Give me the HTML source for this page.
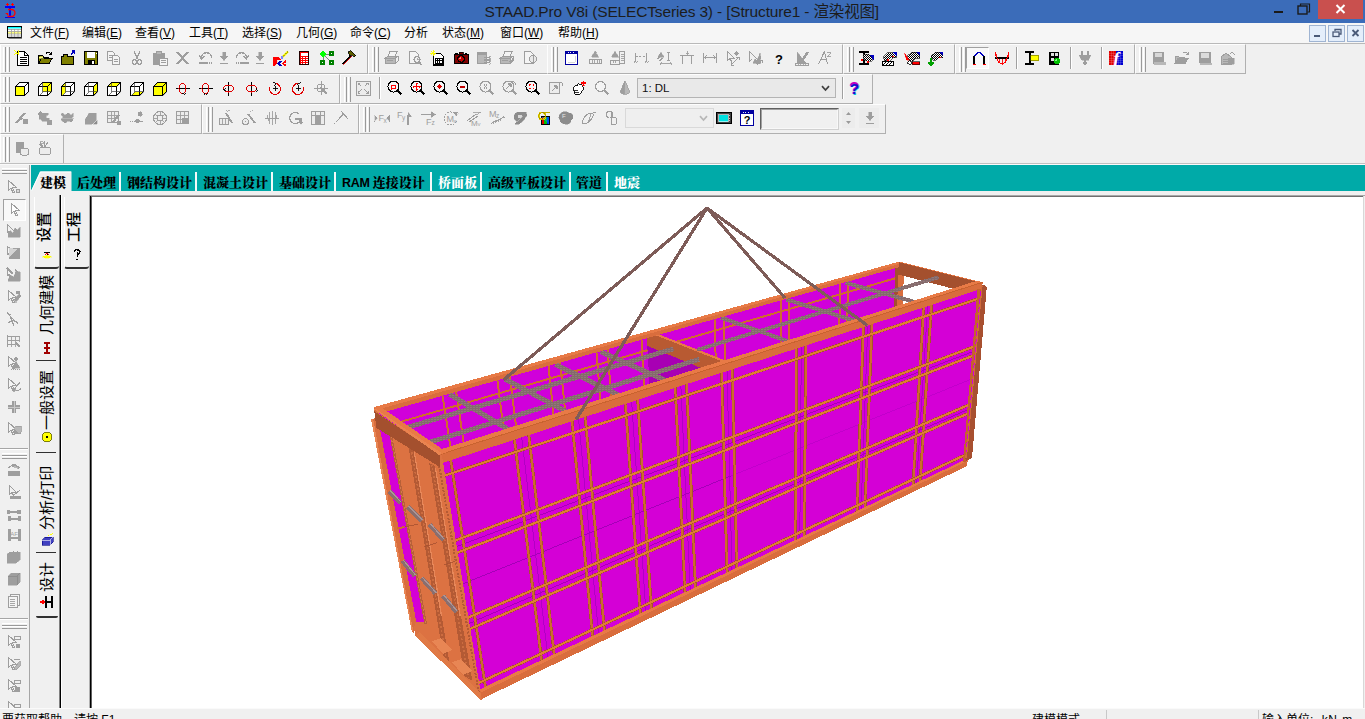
<!DOCTYPE html><html><head><meta charset="utf-8"><title>STAAD.Pro</title><style>
html,body{margin:0;padding:0}
body{width:1365px;height:719px;overflow:hidden;position:relative;background:#f0f0f0;font-family:"Liberation Sans","Noto Sans CJK SC",sans-serif;font-size:12px;color:#000}
.abs{position:absolute}
#title{left:0;top:0;width:1365px;height:23px;background:#3b6cb9}
#title .txt{position:absolute;left:484.5px;top:1px;letter-spacing:-0.16px;font-size:15.5px;line-height:21px;color:#1c1c1c;white-space:nowrap}
#menu{left:0;top:23px;width:1365px;height:20px;background:#f6f6f6;border-bottom:1px solid #b9b9b9}
#menu span{position:absolute;top:1px;line-height:18px;font-size:12px;white-space:nowrap;color:#000}
.tb{position:absolute;height:30px;border:1px solid;border-color:#fdfdfd #b0b0b0 #b0b0b0 #fdfdfd;box-sizing:border-box;background:#f0f0f0}
.grip{position:absolute;top:2px;width:2px;height:25px;border-left:1px solid #fff;border-right:1px solid #9a9a9a;box-sizing:border-box;width:3px}
.ic{position:absolute;width:16px;height:16px}
.sep{position:absolute;width:2px;box-sizing:border-box;border-left:1px solid #a0a0a0;border-right:1px solid #fff;height:22px}
.tab{position:absolute;top:173px;height:18px;line-height:19px;font-family:"Liberation Serif","Noto Serif CJK SC",serif;font-weight:900;font-size:13px;white-space:nowrap;color:#000}
.tsep{position:absolute;top:172px;width:2px;height:19px;background:#f4fafa}
.vt{position:absolute;white-space:nowrap;font-size:15px;line-height:16px;transform-origin:0 0;transform:rotate(-90deg);color:#000}
</style></head><body>
<div id="title" class="abs"><svg class="ic" style="left:2px;top:2px" viewBox="0 0 16 16" width="16" height="16" shape-rendering="crispEdges"><path d="M5.5 1v3M4 2.5h3M10.5 1v3M9 2.5h3" stroke="#ff0000" stroke-width="1" fill="none" /><rect x="3" y="4" width="10" height="1.6" fill="#0000ff"/><rect x="7" y="5.5" width="2" height="10" fill="#0000ff"/><rect x="3" y="15" width="10" height="2" fill="#0000ff"/><path d="M6 7.5h3.5a3.5 3.5 0 0 1 0 7h-4" fill="none" stroke="#ff0000" stroke-width="1.3" shape-rendering="auto"/><path d="M3 11h3v3z" stroke="#ff0000" stroke-width="0.2" fill="#ff0000" /></svg><div class="txt">STAAD.Pro V8i (SELECTseries 3) - [Structure1 - 渲染视图]</div>
<div class="abs" style="left:1274px;top:11px;width:9px;height:2px;background:#1a1a1a"></div>
<svg class="abs" style="left:1297px;top:3px" width="14" height="12" viewBox="0 0 14 12"><path d="M3.5 3V1h9v8h-2" fill="none" stroke="#1a1a1a" stroke-width="1.2"/><rect x="1" y="3" width="9" height="8" fill="none" stroke="#1a1a1a" stroke-width="1.4"/></svg>
<div class="abs" style="left:1318px;top:0;width:45px;height:19px;background:#c9504e"></div>
<svg class="abs" style="left:1335px;top:4px" width="11" height="10" viewBox="0 0 11 10"><path d="M1.5 1L9.5 9M9.5 1L1.5 9" stroke="#fff" stroke-width="2"/></svg>
</div>
<div id="menu" class="abs"><svg class="ic" style="left:6px;top:2px" viewBox="0 0 16 16" width="16" height="16" shape-rendering="auto"><rect x="1.5" y="1.5" width="14" height="11" fill="#fff" stroke="#000" stroke-width="1"/><rect x="2" y="2" width="13" height="1.5" fill="#00ffff"/><rect x="2" y="6.5" width="13" height="2.5" fill="#ffff80"/><path d="M2 4.5h13M2 6.5h13M2 9h13M2 11h13M5.5 4v8M8.5 4v8M12 4v8" stroke="#a0a0a0" stroke-width="0.8" fill="none" /><path d="M2.5 13.2h13.4V3" stroke="#505050" stroke-width="1" fill="none" /></svg>
<span style="left:30px">文件(<u>F</u>)</span>
<span style="left:82px">编辑(<u>E</u>)</span>
<span style="left:135px">查看(<u>V</u>)</span>
<span style="left:189px">工具(<u>T</u>)</span>
<span style="left:242px">选择(<u>S</u>)</span>
<span style="left:296px">几何(<u>G</u>)</span>
<span style="left:350px">命令(<u>C</u>)</span>
<span style="left:404px">分析</span>
<span style="left:442px">状态(<u>M</u>)</span>
<span style="left:500px">窗口(<u>W</u>)</span>
<span style="left:558px">帮助(<u>H</u>)</span>
<div class="abs" style="left:1309px;top:2px;width:17px;height:17px;box-sizing:border-box;border:1px solid #9fb4d2;background:#e4eefb"></div>
<div class="abs" style="left:1328px;top:2px;width:17px;height:17px;box-sizing:border-box;border:1px solid #9fb4d2;background:#e4eefb"></div>
<div class="abs" style="left:1347px;top:2px;width:17px;height:17px;box-sizing:border-box;border:1px solid #9fb4d2;background:#e4eefb"></div>
<div class="abs" style="left:1314px;top:12px;width:6px;height:2px;background:#4a5a78"></div>
<svg class="abs" style="left:1332px;top:5px" width="10" height="10" viewBox="0 0 10 10"><path d="M3 3V1.5h6v4.5h-2" fill="none" stroke="#4a5a78" stroke-width="1.3"/><rect x="1" y="4" width="6" height="4.5" fill="none" stroke="#4a5a78" stroke-width="1.3"/></svg>
<svg class="abs" style="left:1351px;top:6px" width="9" height="8" viewBox="0 0 9 8"><path d="M1.5 1L7.5 7M7.5 1L1.5 7" stroke="#4a5a78" stroke-width="1.8"/></svg>
</div>
<div class="tb" style="left:0px;top:44px;width:368px"><div class="grip" style="left:2px"></div><div class="grip" style="left:6px"></div><svg class="ic" style="left:13px;top:5px" viewBox="0 0 16 16" width="16" height="16" shape-rendering="crispEdges"><path d="M3.5 1.5h7l4 4v10h-11z" stroke="#000" stroke-width="1" fill="#fff" /><path d="M10.5 1.5v4h4" stroke="#000" stroke-width="1" fill="none" /><path d="M5.5 7.5h7M5.5 9.5h7M5.5 11.5h7M5.5 13.5h7" stroke="#000" stroke-width="1" fill="none" /><path d="M0.5 0.5l4 4M4.5 0v5M0 4.5l5-2" stroke="#ffff00" stroke-width="1" fill="none" /></svg><svg class="ic" style="left:36px;top:5px" viewBox="0 0 16 16" width="16" height="16" shape-rendering="crispEdges"><path d="M1.5 13.5v-8h4l1 1.5h5v2" stroke="#000" stroke-width="1" fill="#808000" /><path d="M1.5 13.5l3-5h10.5l-3 5z" stroke="#000" stroke-width="1" fill="#808000" /><path d="M2.5 6.5h3l1 1.5h-4.5z" stroke="#ffff80" stroke-width="0.5" fill="#ffff80" /><path d="M9 3.5c2-2 4-1.5 5 0.5" stroke="#000" stroke-width="1" fill="none" /><path d="M14.5 1.5v3h-3" stroke="#000" stroke-width="1" fill="none" /></svg><svg class="ic" style="left:59px;top:5px" viewBox="0 0 16 16" width="16" height="16" shape-rendering="crispEdges"><path d="M1.5 6.5h12v8h-12z" stroke="#000" stroke-width="1" fill="#808000" /><path d="M3 6.5v-2h4v2" stroke="#000" stroke-width="1" fill="#808000" /><path d="M11 4.5l3.5-3.5M11.5 1h3v3" stroke="#0000c0" stroke-width="1.2" fill="none" /></svg><svg class="ic" style="left:82px;top:5px" viewBox="0 0 16 16" width="16" height="16" shape-rendering="crispEdges"><rect x="1.5" y="1.5" width="13" height="13" fill="#808000" stroke="#000" stroke-width="1"/><rect x="4" y="2" width="8" height="5.5" fill="#fff"/><rect x="4.5" y="9.5" width="7" height="5" fill="#000"/><rect x="9" y="10.5" width="2" height="3" fill="#fff"/><rect x="12.5" y="2.5" width="1.2" height="1.2" fill="#fff"/></svg><svg class="ic" style="left:105px;top:5px" viewBox="0 0 16 16" width="16" height="16" shape-rendering="crispEdges"><path d="M1.5 1.5h5l2 2v7h-7z" stroke="#9e9e9e" stroke-width="1" fill="#f4f4f4" /><path d="M6.5 5.5h5l2 2v7h-7z" stroke="#9e9e9e" stroke-width="1" fill="#f4f4f4" /><path d="M3 5h3M3 7h3M8 9.5h4M8 11.5h4" stroke="#9e9e9e" stroke-width="1" fill="none" /></svg><svg class="ic" style="left:128px;top:5px" viewBox="0 0 16 16" width="16" height="16" shape-rendering="crispEdges"><path d="M5 1l3.5 8M11 1l-3.5 8" stroke="#9e9e9e" stroke-width="1.3" fill="none" /><circle cx="5.5" cy="12" r="2.2" fill="none" stroke="#9e9e9e" stroke-width="1.2"/><circle cx="10.5" cy="12" r="2.2" fill="none" stroke="#9e9e9e" stroke-width="1.2"/></svg><svg class="ic" style="left:151px;top:5px" viewBox="0 0 16 16" width="16" height="16" shape-rendering="crispEdges"><rect x="1.5" y="3.5" width="11" height="11" fill="#9e9e9e" stroke="#9e9e9e" stroke-width="1"/><rect x="4.5" y="1.5" width="5" height="3" fill="#b8b8b8" stroke="#9e9e9e" stroke-width="1"/><rect x="7" y="8" width="8" height="7" fill="#f4f4f4" stroke="#9e9e9e" stroke-width="1"/><path d="M8.5 10.5h5M8.5 12.5h5" stroke="#9e9e9e" stroke-width="1" fill="none" /></svg><svg class="ic" style="left:174px;top:5px" viewBox="0 0 16 16" width="16" height="16" shape-rendering="crispEdges"><path d="M2 2l11 12M13 2l-11 12" stroke="#9e9e9e" stroke-width="2" fill="none" /></svg><svg class="ic" style="left:197px;top:5px" viewBox="0 0 16 16" width="16" height="16" shape-rendering="crispEdges"><path d="M3.5 8c0-7 10-7 10 0" stroke="#9e9e9e" stroke-width="1.3" fill="none" /><path d="M1 5l2.5 4l3-3" stroke="#9e9e9e" stroke-width="1.2" fill="none" /><path d="M1 13h9" stroke="#9e9e9e" stroke-width="2" fill="none" /><path d="M10.5 13h4" stroke="#9e9e9e" stroke-width="2" fill="none" stroke-dasharray="1 1"/></svg><svg class="ic" style="left:215px;top:5px" viewBox="0 0 16 16" width="16" height="16" shape-rendering="crispEdges"><path d="M6.5 2h3v4h2.5l-4 4.5l-4-4.5h2.500z" stroke="#9e9e9e" stroke-width="0.5" fill="#9e9e9e" /><rect x="4" y="12.5" width="8" height="1.3" fill="#9e9e9e"/></svg><svg class="ic" style="left:233px;top:5px" viewBox="0 0 16 16" width="16" height="16" shape-rendering="crispEdges"><path d="M2.5 8c0-7 10-7 10 0" stroke="#9e9e9e" stroke-width="1.3" fill="none" /><path d="M15 5l-2.5 4l-3-3" stroke="#9e9e9e" stroke-width="1.2" fill="none" /><path d="M6 13h9" stroke="#9e9e9e" stroke-width="2" fill="none" /><path d="M1.5 13h4" stroke="#9e9e9e" stroke-width="2" fill="none" stroke-dasharray="1 1"/></svg><svg class="ic" style="left:251px;top:5px" viewBox="0 0 16 16" width="16" height="16" shape-rendering="crispEdges"><path d="M6.5 2h3v4h2.5l-4 4.5l-4-4.5h2.500z" stroke="#9e9e9e" stroke-width="0.5" fill="#9e9e9e" /><rect x="4" y="12.5" width="8" height="1.3" fill="#9e9e9e"/></svg><svg class="ic" style="left:272px;top:5px" viewBox="0 0 16 16" width="16" height="16" shape-rendering="crispEdges"><path d="M0 7h6l2 2.5h-4v3.5l-2 2.5h-2z" stroke="#ff0000" stroke-width="0.1" fill="#ff0000" /><path d="M8.5 11l-3 2.5l3 2.5" stroke="#0000c0" stroke-width="1.8" fill="none" /><path d="M13 11l-3 2.5l3 2.5" stroke="#ff0000" stroke-width="1.8" fill="none" /><path d="M15 1.5l-5.5 5.5" stroke="#ffff00" stroke-width="2.2" shape-rendering="auto"/><path d="M15 1.5l-5.5 5.5" stroke="#000" stroke-width="0.8" stroke-dasharray="1.2 1.2" shape-rendering="auto"/><circle cx="9" cy="7.5" r="1.4" fill="#8080ff"/></svg><svg class="ic" style="left:295px;top:5px" viewBox="0 0 16 16" width="16" height="16" shape-rendering="crispEdges"><rect x="3.5" y="1.5" width="9" height="13" fill="#ff0000" stroke="#200000" stroke-width="1"/><rect x="4.5" y="2.5" width="7" height="3" fill="#fff"/><path d="M4.5 7.5h7M4.5 9.5h7M4.5 11.5h7M4.5 13.4h7" stroke="#fff" stroke-width="1" fill="none" stroke-dasharray="1.7 1"/></svg><svg class="ic" style="left:318px;top:5px" viewBox="0 0 16 16" width="16" height="16" shape-rendering="crispEdges"><path d="M4 4l8 8M4 4h9M4 4v9" stroke="#808080" stroke-width="1" fill="none" /><rect x="10" y="1" width="5" height="5" fill="#008000"/><rect x="1" y="10" width="5" height="5" fill="#008000"/><rect x="10" y="10" width="5" height="5" fill="#008000"/><path d="M4 0.5l3.500 3.500l-3.500 3.500l-3.500-3.500z" stroke="#00ff00" stroke-width="0.3" fill="#00ff00" /><rect x="12" y="2.5" width="1.3" height="1.3" fill="#fff"/><rect x="3" y="12" width="1.3" height="1.3" fill="#fff"/><rect x="12" y="12" width="1.3" height="1.3" fill="#fff"/></svg><svg class="ic" style="left:340px;top:5px" viewBox="0 0 16 16" width="16" height="16" shape-rendering="crispEdges"><path d="M2 14l8-8.500" stroke="#000" stroke-width="2.2" fill="none" /><path d="M2.5 14.5l8-8.500" stroke="#ff0000" stroke-width="0.8" fill="none" /><path d="M7 2l3-1.500l5 5l-2 1.500l-2-2l-2 1z" stroke="#000" stroke-width="0.8" fill="#606000" /></svg></div>
<div class="tb" style="left:368px;top:44px;width:180px"><div class="grip" style="left:3px"></div><div class="grip" style="left:7px"></div><svg class="ic" style="left:15px;top:5px" viewBox="0 0 16 16" width="16" height="16" shape-rendering="crispEdges"><path d="M4 6l2-4.500h7l-2 4.500" stroke="#9e9e9e" stroke-width="1" fill="#f4f4f4" /><path d="M1.5 8l2.500-2h10l-2.500 2z" stroke="#9e9e9e" stroke-width="1" fill="#b8b8b8" /><rect x="1.5" y="8" width="10" height="5" fill="#b8b8b8" stroke="#9e9e9e" stroke-width="1"/><path d="M11.5 13l2.500-2v-5" stroke="#9e9e9e" stroke-width="1" fill="none" /><path d="M3 10.5h6" stroke="#9e9e9e" stroke-width="1.6" fill="none" /></svg><svg class="ic" style="left:38px;top:5px" viewBox="0 0 16 16" width="16" height="16" shape-rendering="crispEdges"><path d="M2.5 1.500h6l3 3v9h-9z" stroke="#9e9e9e" stroke-width="1" fill="#f4f4f4" /><circle cx="10" cy="9.5" r="3" fill="#f0f0f0" stroke="#9e9e9e" stroke-width="1.2"/><path d="M12 12l2.500 3" stroke="#9e9e9e" stroke-width="1.8" fill="none" /><path d="M10 8v1.500h1.500" stroke="#9e9e9e" stroke-width="0.8" fill="none" /></svg><svg class="ic" style="left:61px;top:5px" viewBox="0 0 16 16" width="16" height="16" shape-rendering="crispEdges"><path d="M3.5 3.500h7l3 3v8.500h-10z" stroke="#000" stroke-width="1.2" fill="#fff" /><rect x="5" y="8" width="7" height="5.5" fill="#fff" stroke="#000" stroke-width="1"/><path d="M5 10.500h7M7.300 8v5.500M9.600 8v5.500" stroke="#000" stroke-width="1" fill="none" /><path d="M3 0v6M0 3h6M1 1l4 4M5 1l-4 4" stroke="#ffff00" stroke-width="0.9" fill="none" /></svg><svg class="ic" style="left:84px;top:5px" viewBox="0 0 16 16" width="16" height="16" shape-rendering="crispEdges"><rect x="1" y="4.5" width="14" height="9" fill="#800000" stroke="#000" stroke-width="1"/><rect x="2" y="2.5" width="3" height="2" fill="#000"/><rect x="6" y="2" width="4" height="2.5" fill="#800000" stroke="#000" stroke-width="0.8"/><rect x="11.5" y="2.5" width="2.5" height="2" fill="#000"/><circle cx="8" cy="9" r="3.2" fill="#c00000" stroke="#000" stroke-width="1.2"/><circle cx="7.3" cy="8.3" r="1" fill="#ff8080"/></svg><svg class="ic" style="left:107px;top:5px" viewBox="0 0 16 16" width="16" height="16" shape-rendering="crispEdges"><rect x="1.5" y="2.5" width="9" height="11" fill="#b8b8b8" stroke="#9e9e9e" stroke-width="1"/><rect x="1.5" y="2.5" width="9" height="2.5" fill="#9e9e9e"/><path d="M8 7.500h6M8 10h6M8 12.500h6" stroke="#9e9e9e" stroke-width="1.2" fill="none" /><path d="M12.5 6l2 1.500l-2 1.500M12.5 8.500l2 1.500l-2 1.500M12.5 11l2 1.500l-2 1.500" stroke="#9e9e9e" stroke-width="0.8" fill="none" /></svg><svg class="ic" style="left:130px;top:5px" viewBox="0 0 16 16" width="16" height="16" shape-rendering="crispEdges"><path d="M4 6l2-4.500h7l-2 4.500" stroke="#9e9e9e" stroke-width="1" fill="#f4f4f4" /><path d="M1.5 8l2.500-2h10l-2.500 2z" stroke="#9e9e9e" stroke-width="1" fill="#b8b8b8" /><rect x="1.5" y="8" width="10" height="5" fill="#b8b8b8" stroke="#9e9e9e" stroke-width="1"/><path d="M11.5 13l2.500-2v-5" stroke="#9e9e9e" stroke-width="1" fill="none" /><path d="M3 10.5h6" stroke="#9e9e9e" stroke-width="1.6" fill="none" /><path d="M10 8l4 4M13 8v3h-3" stroke="#9e9e9e" stroke-width="1" fill="none" /></svg><svg class="ic" style="left:153px;top:5px" viewBox="0 0 16 16" width="16" height="16" shape-rendering="crispEdges"><path d="M2.5 1.500h6l3 3v9h-9z" stroke="#9e9e9e" stroke-width="1" fill="#f4f4f4" /><circle cx="11" cy="9" r="3.5" fill="#e8e8e8" stroke="#9e9e9e" stroke-width="1.2"/><path d="M11 5.500v7" stroke="#9e9e9e" stroke-width="1" fill="none" /></svg></div>
<div class="tb" style="left:547px;top:44px;width:296px"><div class="grip" style="left:3px"></div><div class="grip" style="left:7px"></div><svg class="ic" style="left:16px;top:5px" viewBox="0 0 16 16" width="16" height="16" shape-rendering="crispEdges"><rect x="1.5" y="1.5" width="12" height="13" fill="#fff" stroke="#0000a0" stroke-width="1.6"/><rect x="1.5" y="1.5" width="12" height="2.5" fill="#0000a0"/><path d="M3.5 2.700h1M6 2.700h1M8.500 2.700h1" stroke="#fff" stroke-width="0.9" fill="none" /><path d="M11 6v6M4 12.500h7" stroke="#d8d8d8" stroke-width="1" fill="none" /></svg><svg class="ic" style="left:39px;top:5px" viewBox="0 0 16 16" width="16" height="16" shape-rendering="crispEdges"><path d="M8 1l3.500 6h-7z" stroke="#9e9e9e" stroke-width="0.5" fill="#9e9e9e" /><path d="M8 0.500v3M6.500 2h3" stroke="#9e9e9e" stroke-width="0.8" fill="none" /><rect x="2.5" y="9.5" width="12" height="4" fill="#f0f0f0" stroke="#9e9e9e" stroke-width="1"/><path d="M5 10v2.500M7.500 10v2.500M10 10v2.500M12.500 10v2.500" stroke="#9e9e9e" stroke-width="0.9" fill="none" /></svg><svg class="ic" style="left:62px;top:5px" viewBox="0 0 16 16" width="16" height="16" shape-rendering="crispEdges"><path d="M5 1l3.500 6h-7z" stroke="#9e9e9e" stroke-width="0.5" fill="#9e9e9e" /><rect x="0.5" y="10" width="9" height="4" fill="#f0f0f0" stroke="#9e9e9e" stroke-width="1"/><path d="M3 10.500v2.500M5.500 10.500v2.500" stroke="#9e9e9e" stroke-width="0.9" fill="none" /><rect x="9.5" y="1.5" width="5" height="12" fill="#f0f0f0" stroke="#9e9e9e" stroke-width="1"/><path d="M11 4h2.500M11 6h2.500M11 8h2.500M11 10h2.500" stroke="#9e9e9e" stroke-width="0.9" fill="none" /></svg><svg class="ic" style="left:85px;top:5px" viewBox="0 0 16 16" width="16" height="16" shape-rendering="crispEdges"><path d="M2.5 3v9M13.500 3v9" stroke="#9e9e9e" stroke-width="1.1" fill="none" /><path d="M2.500 6.500h11" stroke="#9e9e9e" stroke-width="1" fill="none" stroke-dasharray="2 1.5"/><path d="M1 10.500l1.500 2l1.500-2M12 10.500l1.500 2l1.500-2" stroke="#9e9e9e" stroke-width="0.9" fill="none" /></svg><svg class="ic" style="left:108px;top:5px" viewBox="0 0 16 16" width="16" height="16" shape-rendering="crispEdges"><path d="M5 2l3 5h-6z" stroke="#9e9e9e" stroke-width="0.5" fill="#9e9e9e" /><path d="M1 9l4-3M3 11l4-3" stroke="#9e9e9e" stroke-width="1.3" fill="none" /><path d="M12.500 2v8M11 2h3M11 10h3" stroke="#9e9e9e" stroke-width="1" fill="none" /><path d="M4 13.500h11M5.500 12l-1.500 1.500l1.500 1.500M13.500 12l1.500 1.500l-1.500 1.500" stroke="#9e9e9e" stroke-width="0.9" fill="none" /></svg><svg class="ic" style="left:131px;top:5px" viewBox="0 0 16 16" width="16" height="16" shape-rendering="crispEdges"><path d="M1 5.500h14M3.500 5.500v8.500M12.500 5.500v8.500" stroke="#9e9e9e" stroke-width="1.1" fill="none" /><path d="M8 1v4M6.500 3h3" stroke="#9e9e9e" stroke-width="0.9" fill="none" /></svg><svg class="ic" style="left:154px;top:5px" viewBox="0 0 16 16" width="16" height="16" shape-rendering="crispEdges"><path d="M1.5 3v10M14.5 3v10M2 7.5h12" stroke="#9e9e9e" stroke-width="1" fill="none" /><path d="M4.5 5.5l-2 2l2 2M11.5 5.5l2 2l-2 2" stroke="#9e9e9e" stroke-width="1" fill="none" /></svg><svg class="ic" style="left:177px;top:5px" viewBox="0 0 16 16" width="16" height="16" shape-rendering="crispEdges"><path d="M2 1v10l3-2.500l2 4" stroke="#9e9e9e" stroke-width="1" fill="#f4f4f4" /><path d="M2 1l7 7h-4" stroke="#9e9e9e" stroke-width="1" fill="none" /><circle cx="11.5" cy="3.5" r="2.2" fill="#9e9e9e"/><path d="M6 15l8-8M6 15v-3M6 15h3M14 7v3M14 7h-3" stroke="#9e9e9e" stroke-width="1" fill="none" /></svg><svg class="ic" style="left:200px;top:5px" viewBox="0 0 16 16" width="16" height="16" shape-rendering="crispEdges"><path d="M1 1l9 9" stroke="#9e9e9e" stroke-width="1.1" fill="none" /><path d="M1 1v11l3-3" stroke="#9e9e9e" stroke-width="1" fill="none" /><path d="M5 13l2-4l2 2l3-8l1 6l-3 1l3 3l-3 1z" stroke="#9e9e9e" stroke-width="0.6" fill="#9e9e9e" /><path d="M9 15l5-5M14 10v3M14 10h-3" stroke="#9e9e9e" stroke-width="1" fill="none" /></svg><svg class="ic" style="left:223px;top:5px" viewBox="0 0 16 16" width="16" height="16" shape-rendering="crispEdges"><text x="8" y="13.5" font-family="Liberation Sans,sans-serif" font-weight="bold" font-size="13" text-anchor="middle" fill="#000">?</text></svg><svg class="ic" style="left:246px;top:5px" viewBox="0 0 16 16" width="16" height="16" shape-rendering="crispEdges"><path d="M3 13v-11l9 11z" stroke="#9e9e9e" stroke-width="0.6" fill="#9e9e9e" /><path d="M7 12l7-10" stroke="#9e9e9e" stroke-width="2.4" fill="none" /><rect x="1.5" y="13" width="13" height="2.5" fill="#f0f0f0" stroke="#9e9e9e" stroke-width="1"/><path d="M4 13v1.500M6.500 13v1.500M9 13v1.500M11.500 13v1.500" stroke="#9e9e9e" stroke-width="0.8" fill="none" /></svg><svg class="ic" style="left:269px;top:5px" viewBox="0 0 16 16" width="16" height="16" shape-rendering="crispEdges"><path d="M1.5 14l6-12.500M7.500 1.500l3 12.500M4 9h5" stroke="#9e9e9e" stroke-width="1" fill="none" /><path d="M9.500 2h4.500l-4.500 4h4.500" stroke="#9e9e9e" stroke-width="0.9" fill="none" /></svg></div>
<div class="tb" style="left:843px;top:44px;width:112px"><div class="grip" style="left:3px"></div><div class="grip" style="left:7px"></div><svg class="ic" style="left:14px;top:5px" viewBox="0 0 16 16" width="16" height="16" shape-rendering="crispEdges"><defs><pattern id="hk" width="2" height="2" patternUnits="userSpaceOnUse"><rect width="2" height="2" fill="#fff"/><rect width="1" height="1" fill="#000"/><rect x="1" y="1" width="1" height="1" fill="#000"/></pattern></defs><rect x="1" y="1" width="10" height="2" fill="#000"/><rect x="1" y="13" width="10" height="2" fill="#000"/><rect x="4.5" y="3" width="2.5" height="10" fill="#000"/><path d="M5 4l5 0l4 3v4h-5l-4-2z" stroke="#000" stroke-width="0.5" fill="url(#hk)" /><path d="M12 5h3.500v5z" stroke="#0000c0" stroke-width="0.3" fill="#0000c0" /><rect x="3" y="9" width="2" height="1.5" fill="#ff0000"/><rect x="9" y="11" width="2" height="1.5" fill="#ff0000"/></svg><svg class="ic" style="left:37px;top:5px" viewBox="0 0 16 16" width="16" height="16" shape-rendering="crispEdges"><path d="M2 7l5-4.500h5l3 2v3h-4l-3 3h-4z" stroke="#000" stroke-width="0.6" fill="url(#hk)" /><path d="M12 2h3.500v4z" stroke="#0000c0" stroke-width="0.3" fill="#0000c0" /><rect x="1.5" y="11" width="11" height="4" fill="#fff" stroke="#000" stroke-width="1"/><path d="M2 15l4-4M5 15l4-4M8 15l4-4" stroke="#000" stroke-width="1.2" fill="none" /><rect x="11" y="5.5" width="2" height="1.5" fill="#ff0000"/><rect x="6" y="9" width="2" height="1.5" fill="#ff0000"/></svg><svg class="ic" style="left:60px;top:5px" viewBox="0 0 16 16" width="16" height="16" shape-rendering="crispEdges"><path d="M3 6l5-4h5l2.500 2v4h-4l-3 3h-3z" stroke="#000" stroke-width="0.6" fill="url(#hk)" /><path d="M12.500 2h3.500v4z" stroke="#0000c0" stroke-width="0.3" fill="#0000c0" /><path d="M0.500 3l5 7h-3z" stroke="#ff0000" stroke-width="0.4" fill="#ff0000" /><rect x="8" y="11.5" width="7.5" height="3" fill="#ff0000" stroke="#000" stroke-width="0.6"/><circle cx="5.5" cy="12.5" r="1.8" fill="#fff" stroke="#000" stroke-width="0.8"/></svg><svg class="ic" style="left:83px;top:5px" viewBox="0 0 16 16" width="16" height="16" shape-rendering="crispEdges"><path d="M4 6l5-4h5l2 2v3.500h-4l-3 2.500h-3z" stroke="#000" stroke-width="0.6" fill="url(#hk)" /><path d="M12.500 2h3.500v4z" stroke="#0000c0" stroke-width="0.3" fill="#0000c0" /><rect x="12" y="6.5" width="2" height="1.5" fill="#ff0000"/><path d="M4 8v7M1.500 12.500l2.500 2.500l2.500-2.500" stroke="#00a000" stroke-width="1.5" fill="none" /></svg></div>
<div class="tb" style="left:955px;top:44px;width:180px"><div class="grip" style="left:3px"></div><div class="grip" style="left:7px"></div><svg class="ic" style="left:15px;top:5px" viewBox="0 0 16 16" width="16" height="16" shape-rendering="crispEdges"><path d="M3 14v-8M13 14v-8" stroke="#000" stroke-width="1.4" fill="none" /><path d="M3 6l5-4l5 4" stroke="#0000c0" stroke-width="1.3" fill="none" /><rect x="1.5" y="13.5" width="3" height="1.5" fill="#ff0000"/><rect x="11.5" y="13.5" width="3" height="1.5" fill="#ff0000"/></svg><svg class="ic" style="left:38px;top:5px" viewBox="0 0 16 16" width="16" height="16" shape-rendering="crispEdges"><path d="M1 8h14" stroke="#000" stroke-width="2" fill="none" /><path d="M1.500 2c0 3 1 6 1.500 6M14.500 2c0 3-1 6-1.500 6M3 8.500c2 7 8 7 10 0" stroke="#ff0000" stroke-width="1.1" fill="none" /><path d="M5 9v4M8 9v5.500M11 9v4M2 4v3M14 4v3" stroke="#ff0000" stroke-width="0.9" fill="none" /></svg><div class="sep" style="left:60px;top:2px"></div><svg class="ic" style="left:67px;top:5px" viewBox="0 0 16 16" width="16" height="16" shape-rendering="crispEdges"><rect x="2" y="1" width="9" height="2" fill="#000"/><rect x="2" y="13" width="9" height="2" fill="#000"/><rect x="5.5" y="3" width="2" height="10" fill="#000"/><rect x="7.5" y="5" width="8" height="5.5" fill="#ffff00" stroke="#606000" stroke-width="0.6"/></svg><svg class="ic" style="left:90px;top:5px" viewBox="0 0 16 16" width="16" height="16" shape-rendering="crispEdges"><rect x="3" y="1.5" width="10" height="13" fill="#000"/><rect x="4.5" y="3" width="3" height="3" fill="#e0e0e0"/><rect x="9" y="3" width="2.5" height="3" fill="#e0e0e0"/><rect x="4.5" y="8" width="3" height="3" fill="#e0e0e0"/><circle cx="11" cy="11" r="3" fill="#00c000"/><circle cx="10.3" cy="10.3" r="1" fill="#80ff80"/></svg><div class="sep" style="left:114px;top:2px"></div><svg class="ic" style="left:121px;top:5px" viewBox="0 0 16 16" width="16" height="16" shape-rendering="crispEdges"><path d="M5 1v4M11 1v4" stroke="#9e9e9e" stroke-width="1.4" fill="none" /><path d="M2 5h12l-2.500 5h-7z" stroke="#9e9e9e" stroke-width="0.5" fill="#9e9e9e" /><path d="M8 10v4M6 12l2 2.500l2-2.500" stroke="#9e9e9e" stroke-width="1.2" fill="none" /></svg><div class="sep" style="left:145px;top:2px"></div><svg class="ic" style="left:152px;top:5px" viewBox="0 0 16 16" width="16" height="16" shape-rendering="crispEdges"><rect x="1" y="1" width="7" height="14" fill="#e00000"/><rect x="8" y="1" width="7" height="14" fill="#0000d0"/><path d="M1 3.300h14M1 5.600h14M1 8h14M1 10.300h14M1 12.600h14M3.300 1v14M5.600 1v14M10.300 1v14M12.600 1v14" stroke="#ffffff" stroke-width="0.35" fill="none" opacity="0.45"/><text x="8.3" y="14" font-family="Liberation Serif,serif" font-style="italic" font-weight="bold" font-size="17" text-anchor="middle" fill="#fff">f</text></svg><div class="abs" style="left:10px;top:2px;width:23px;height:22px;box-sizing:border-box;border:1px solid;border-color:#a0a0a0 #fff #fff #a0a0a0;background:#f8f8f8"></div><svg class="ic" style="left:15px;top:5px" viewBox="0 0 16 16" width="16" height="16" shape-rendering="crispEdges"><path d="M3 14v-8M13 14v-8" stroke="#000" stroke-width="1.4" fill="none" /><path d="M3 6l5-4l5 4" stroke="#0000c0" stroke-width="1.3" fill="none" /><rect x="1.5" y="13.5" width="3" height="1.5" fill="#ff0000"/><rect x="11.5" y="13.5" width="3" height="1.5" fill="#ff0000"/></svg></div>
<div class="tb" style="left:1135px;top:44px;width:111px"><div class="grip" style="left:3px"></div><div class="grip" style="left:7px"></div><svg class="ic" style="left:15px;top:5px" viewBox="0 0 16 16" width="16" height="16" shape-rendering="crispEdges"><rect x="2" y="1.5" width="11" height="12" fill="#9e9e9e"/><rect x="4" y="3" width="7" height="4" fill="#d8d8d8"/><rect x="3" y="12" width="12" height="2.5" fill="#b8b8b8"/></svg><svg class="ic" style="left:38px;top:5px" viewBox="0 0 16 16" width="16" height="16" shape-rendering="crispEdges"><path d="M1 13v-7h3l1 1h5v2" stroke="#9e9e9e" stroke-width="1" fill="#b8b8b8" /><path d="M1 13.500l3-5h10l-3 5z" stroke="#9e9e9e" stroke-width="1" fill="#9e9e9e" /><path d="M9 3c2-1.500 4-1 5 1M14.500 1.500v3h-3" stroke="#9e9e9e" stroke-width="1" fill="none" /></svg><svg class="ic" style="left:61px;top:5px" viewBox="0 0 16 16" width="16" height="16" shape-rendering="crispEdges"><rect x="2" y="1.5" width="12" height="11" fill="#9e9e9e"/><rect x="4" y="2.5" width="8" height="5" fill="#dcdcdc"/><rect x="3" y="12.5" width="12" height="2" fill="#b8b8b8"/></svg><svg class="ic" style="left:84px;top:5px" viewBox="0 0 16 16" width="16" height="16" shape-rendering="crispEdges"><path d="M1 14v-7l5-4l5 4v7z" stroke="#9e9e9e" stroke-width="1" fill="#b8b8b8" /><path d="M3 9h5M3 11h5M3 13h5" stroke="#9e9e9e" stroke-width="1" fill="none" /><path d="M8 8h6v6h-6z" stroke="#9e9e9e" stroke-width="0.5" fill="#9e9e9e" /><path d="M10 4l2-2l3 3" stroke="#9e9e9e" stroke-width="1.2" fill="none" /></svg></div>
<div class="tb" style="left:0px;top:74px;width:340px"><div class="grip" style="left:2px"></div><div class="grip" style="left:6px"></div><svg class="ic" style="left:13px;top:5px" viewBox="0 0 16 16" width="16" height="16" shape-rendering="crispEdges"><g transform="translate(0,1)"><rect x="0" y="0" width="16" height="16" fill="none"/><path d="M1.500 5.500l4-4h9v9l-4 4h-9z" stroke="#000" stroke-width="0.1" fill="#fff" /><path d="M1.5 5.500h9v9h-9z" stroke="#000" stroke-width="0.1" fill="#ffff00" /><path d="M1.500 5.500h9v9h-9zM1.500 5.500l4-4h9l-4 4M14.500 1.500v9l-4 4" stroke="#000" stroke-width="1.1" fill="none" /></g></svg><svg class="ic" style="left:36px;top:5px" viewBox="0 0 16 16" width="16" height="16" shape-rendering="crispEdges"><g transform="translate(0,1)"><rect x="0" y="0" width="16" height="16" fill="none"/><path d="M1.500 5.500l4-4h9v9l-4 4h-9z" stroke="#000" stroke-width="0.1" fill="#fff" /><path d="M5.500 1.500h9v9h-9z" stroke="#000" stroke-width="0.1" fill="#ffff00" /><path d="M1.500 5.500h9v9h-9zM1.500 5.500l4-4h9l-4 4M14.500 1.500v9l-4 4" stroke="#000" stroke-width="1.1" fill="none" /><path d="M5.500 1.500v9h9M5.500 10.500l-4 4" stroke="#404040" stroke-width="0.7" fill="none" /></g></svg><svg class="ic" style="left:59px;top:5px" viewBox="0 0 16 16" width="16" height="16" shape-rendering="crispEdges"><g transform="translate(0,1)"><rect x="0" y="0" width="16" height="16" fill="none"/><path d="M1.500 5.500l4-4h9v9l-4 4h-9z" stroke="#000" stroke-width="0.1" fill="#fff" /><path d="M1.500 5.500l4-4v9l-4 4z" stroke="#000" stroke-width="0.1" fill="#ffff00" /><path d="M1.500 5.500h9v9h-9zM1.500 5.500l4-4h9l-4 4M14.500 1.500v9l-4 4" stroke="#000" stroke-width="1.1" fill="none" /><path d="M5.500 1.500v9h9M5.500 10.500l-4 4" stroke="#404040" stroke-width="0.7" fill="none" /></g></svg><svg class="ic" style="left:82px;top:5px" viewBox="0 0 16 16" width="16" height="16" shape-rendering="crispEdges"><g transform="translate(0,1)"><rect x="0" y="0" width="16" height="16" fill="none"/><path d="M1.500 5.500l4-4h9v9l-4 4h-9z" stroke="#000" stroke-width="0.1" fill="#fff" /><path d="M10.500 5.500l4-4v9l-4 4z" stroke="#000" stroke-width="0.1" fill="#ffff00" /><path d="M1.500 5.500h9v9h-9zM1.500 5.500l4-4h9l-4 4M14.500 1.500v9l-4 4" stroke="#000" stroke-width="1.1" fill="none" /><path d="M5.500 1.500v9h9M5.500 10.500l-4 4" stroke="#404040" stroke-width="0.7" fill="none" /></g></svg><svg class="ic" style="left:105px;top:5px" viewBox="0 0 16 16" width="16" height="16" shape-rendering="crispEdges"><g transform="translate(0,1)"><rect x="0" y="0" width="16" height="16" fill="none"/><path d="M1.500 5.500l4-4h9v9l-4 4h-9z" stroke="#000" stroke-width="0.1" fill="#fff" /><path d="M1.5 5.500l4-4h9l-4 4z" stroke="#000" stroke-width="0.1" fill="#ffff00" /><path d="M1.500 5.500h9v9h-9zM1.500 5.500l4-4h9l-4 4M14.500 1.500v9l-4 4" stroke="#000" stroke-width="1.1" fill="none" /><path d="M5.500 1.500v9h9M5.500 10.500l-4 4" stroke="#404040" stroke-width="0.7" fill="none" /></g></svg><svg class="ic" style="left:128px;top:5px" viewBox="0 0 16 16" width="16" height="16" shape-rendering="crispEdges"><g transform="translate(0,1)"><rect x="0" y="0" width="16" height="16" fill="none"/><path d="M1.500 5.500l4-4h9v9l-4 4h-9z" stroke="#000" stroke-width="0.1" fill="#fff" /><path d="M1.500 14.500l4-4h9l-4 4z" stroke="#000" stroke-width="0.1" fill="#ffff00" /><path d="M1.500 5.500h9v9h-9zM1.500 5.500l4-4h9l-4 4M14.500 1.500v9l-4 4" stroke="#000" stroke-width="1.1" fill="none" /><path d="M5.500 1.500v9h9M5.500 10.500l-4 4" stroke="#404040" stroke-width="0.7" fill="none" /></g></svg><svg class="ic" style="left:151px;top:5px" viewBox="0 0 16 16" width="16" height="16" shape-rendering="crispEdges"><g transform="translate(0,1)"><rect x="0" y="0" width="16" height="16" fill="none"/><path d="M1.500 5.500l4-4h9v9l-4 4h-9z" stroke="#000" stroke-width="0.1" fill="#fff" /><path d="M1.5 5.500h9v9h-9z" stroke="#000" stroke-width="0.1" fill="#ffff00" /><path d="M1.5 5.500l4-4h9l-4 4z" stroke="#000" stroke-width="0.1" fill="#ffff00" /><path d="M10.500 5.500l4-4v9l-4 4z" stroke="#000" stroke-width="0.1" fill="#ffff00" /><path d="M1.500 5.500h9v9h-9zM1.500 5.500l4-4h9l-4 4M14.500 1.500v9l-4 4" stroke="#000" stroke-width="1.1" fill="none" /></g></svg><svg class="ic" style="left:174px;top:5px" viewBox="0 0 16 16" width="16" height="16" shape-rendering="crispEdges"><g transform="translate(0,1)"><path d="M1 7.5h14" stroke="#000" stroke-width="1" fill="none" /><ellipse cx="7.5" cy="7.5" rx="3.5" ry="5" fill="none" stroke="#e00000" stroke-width="1"/><path d="M6.500 12l2 1.800l1.500-2.300" stroke="#000" stroke-width="0.9" fill="none" /></g></svg><svg class="ic" style="left:197px;top:5px" viewBox="0 0 16 16" width="16" height="16" shape-rendering="crispEdges"><g transform="translate(0,1)"><path d="M1 7.5h14" stroke="#000" stroke-width="1" fill="none" /><ellipse cx="7.5" cy="7.5" rx="3.5" ry="5" fill="none" stroke="#e00000" stroke-width="1"/><path d="M9.500 12l-2 1.800l-1.500-2.300" stroke="#000" stroke-width="0.9" fill="none" /></g></svg><svg class="ic" style="left:220px;top:5px" viewBox="0 0 16 16" width="16" height="16" shape-rendering="crispEdges"><g transform="translate(0,1)"><path d="M7.5 1v14" stroke="#000" stroke-width="1" fill="none" /><ellipse cx="7.5" cy="7.5" rx="5" ry="3.5" fill="none" stroke="#e00000" stroke-width="1"/><path d="M4 6.500l-1.800 2l2.300 1.500" stroke="#000" stroke-width="0.9" fill="none" /></g></svg><svg class="ic" style="left:243px;top:5px" viewBox="0 0 16 16" width="16" height="16" shape-rendering="crispEdges"><g transform="translate(0,1)"><path d="M7.5 1v14" stroke="#000" stroke-width="1" fill="none" /><ellipse cx="7.5" cy="7.5" rx="5" ry="3.5" fill="none" stroke="#e00000" stroke-width="1"/><path d="M12 6.500l1.800 2l-2.300 1.500" stroke="#000" stroke-width="0.9" fill="none" /></g></svg><svg class="ic" style="left:266px;top:5px" viewBox="0 0 16 16" width="16" height="16" shape-rendering="crispEdges"><g transform="translate(0,1)"><path d="M8 2.500a5.500 5.500 0 1 1 -5.300 4" fill="none" stroke="#e00000" stroke-width="1.2"/><path d="M8 5v5M5.500 7.500h5" stroke="#000" stroke-width="0.9" fill="none" /><path d="M5.500 1l3 1.500l-2 2.500" stroke="#000" stroke-width="0.9" fill="none" /></g></svg><svg class="ic" style="left:289px;top:5px" viewBox="0 0 16 16" width="16" height="16" shape-rendering="crispEdges"><g transform="translate(0,1)"><g transform="translate(16,0) scale(-1,1)"><path d="M8 2.500a5.500 5.500 0 1 1 -5.300 4" fill="none" stroke="#e00000" stroke-width="1.2"/></g><path d="M8 5v5M5.500 7.500h5" stroke="#000" stroke-width="0.9" fill="none" /><path d="M10.500 1l-3 1.500l2 2.500" stroke="#000" stroke-width="0.9" fill="none" /></g></svg><svg class="ic" style="left:312px;top:5px" viewBox="0 0 16 16" width="16" height="16" shape-rendering="crispEdges"><path d="M8 1v14M1 8h14" stroke="#9e9e9e" stroke-width="1" fill="none" /><circle cx="8" cy="8" r="4" fill="none" stroke="#9e9e9e" stroke-width="1"/><path d="M8 8l6 6M9 8h-1v1" stroke="#9e9e9e" stroke-width="1.8" fill="none" /></svg></div>
<div class="tb" style="left:340px;top:74px;width:533px"><div class="grip" style="left:3px"></div><div class="grip" style="left:7px"></div><svg class="ic" style="left:14px;top:5px" viewBox="0 0 16 16" width="16" height="16" shape-rendering="crispEdges"><rect x="1" y="1" width="14" height="14" fill="#ececec" stroke="#9e9e9e" stroke-width="1"/><path d="M3 3l3.500 3.500M13 3l-3.500 3.500M3 13l3.500-3.500M13 13l-3.500-3.500" stroke="#9e9e9e" stroke-width="1" fill="none" /><path d="M3 5v-2h2M11 3h2v2M3 11v2h2M13 11v2h-2" stroke="#9e9e9e" stroke-width="1" fill="none" /></svg><div class="sep" style="left:38px;top:2px"></div><svg class="ic" style="left:46px;top:5px" viewBox="0 0 16 16" width="16" height="16" shape-rendering="crispEdges"><circle cx="6.5" cy="6.5" r="5.5" fill="#f4f4f4" stroke="#000" stroke-width="1"/><path d="M10.500 10.500l4 4" stroke="#000" stroke-width="2" fill="none" /><rect x="4.5" y="5.5" width="4" height="3" fill="none" stroke="#ff0000" stroke-width="1"/><path d="M3.500 9.500h1M9.500 3.500h1" stroke="#ff0000" stroke-width="1" fill="none" /></svg><svg class="ic" style="left:69px;top:5px" viewBox="0 0 16 16" width="16" height="16" shape-rendering="crispEdges"><circle cx="6.5" cy="6.5" r="5.5" fill="#f4f4f4" stroke="#000" stroke-width="1"/><path d="M10.500 10.500l4 4" stroke="#000" stroke-width="2" fill="none" /><path d="M6.500 2.500v8M2.500 6.500h8" stroke="#ff0000" stroke-width="1" fill="none" /><path d="M5.500 3.500h2M5.500 9.500h2M3.500 5.500v2M9.500 5.500v2" stroke="#ff0000" stroke-width="1" fill="none" /></svg><svg class="ic" style="left:92px;top:5px" viewBox="0 0 16 16" width="16" height="16" shape-rendering="crispEdges"><circle cx="6.5" cy="6.5" r="5.5" fill="#f4f4f4" stroke="#000" stroke-width="1"/><path d="M10.500 10.500l4 4" stroke="#000" stroke-width="2" fill="none" /><path d="M6.500 4v5M4 6.500h5" stroke="#c00000" stroke-width="1" fill="none" /><rect x="5" y="5" width="3" height="3" fill="#e00000"/></svg><svg class="ic" style="left:115px;top:5px" viewBox="0 0 16 16" width="16" height="16" shape-rendering="crispEdges"><circle cx="6.5" cy="6.5" r="5.5" fill="#f4f4f4" stroke="#000" stroke-width="1"/><path d="M10.500 10.500l4 4" stroke="#000" stroke-width="2" fill="none" /><path d="M4 6.500h5" stroke="#c00000" stroke-width="2" fill="none" /></svg><svg class="ic" style="left:138px;top:5px" viewBox="0 0 16 16" width="16" height="16" shape-rendering="crispEdges"><circle cx="6.5" cy="6.5" r="5.5" fill="#f0f0f0" stroke="#9e9e9e" stroke-width="1"/><path d="M10.500 10.500l4 4" stroke="#9e9e9e" stroke-width="2" fill="none" /><path d="M5 4.500l3 4M8 4.500l-3 4" stroke="#9e9e9e" stroke-width="1" fill="none" /></svg><svg class="ic" style="left:161px;top:5px" viewBox="0 0 16 16" width="16" height="16" shape-rendering="crispEdges"><circle cx="6.5" cy="6.5" r="5.5" fill="#f0f0f0" stroke="#9e9e9e" stroke-width="1"/><path d="M10.500 10.500l4 4" stroke="#9e9e9e" stroke-width="2" fill="none" /><path d="M4 9l5-5M9 4v3M9 4h-3" stroke="#9e9e9e" stroke-width="1.3" fill="none" /><path d="M9 2c3-1 5 1 5 3" stroke="#9e9e9e" stroke-width="1" fill="none" /></svg><svg class="ic" style="left:184px;top:5px" viewBox="0 0 16 16" width="16" height="16" shape-rendering="crispEdges"><circle cx="6.5" cy="6.5" r="5.5" fill="#f4f4f4" stroke="#000" stroke-width="1"/><path d="M10.500 10.500l4 4" stroke="#000" stroke-width="2" fill="none" /><path d="M4.500 5.500v-1h1M7.500 4.500h1v1M8.500 7.500v1h-1M5.500 8.500h-1v-1" stroke="#ff0000" stroke-width="1" fill="none" /></svg><svg class="ic" style="left:207px;top:5px" viewBox="0 0 16 16" width="16" height="16" shape-rendering="crispEdges"><rect x="1.5" y="2.5" width="10" height="11" fill="#ececec" stroke="#9e9e9e" stroke-width="1"/><path d="M4 11l5-5M9 6v3M9 6h-3" stroke="#9e9e9e" stroke-width="1.3" fill="none" /><path d="M11 2c3 0 4 2 3 4" stroke="#9e9e9e" stroke-width="1" fill="none" /></svg><svg class="ic" style="left:230px;top:5px" viewBox="0 0 16 16" width="16" height="16" shape-rendering="crispEdges"><path d="M2 8c1-2 3-3 4-2l1-2c1-1 2 0 2 1l1-1c1 0 2 1 1 2l1 1c1 1 0 3-1 4l-2 3h-5z" stroke="#000" stroke-width="0.9" fill="#fff" /><path d="M3 10h4M3 12h5M4 14h4" stroke="#000" stroke-width="0.8" fill="none" /><path d="M12.500 0.500v5M10 3h5" stroke="#ff0000" stroke-width="1.2" fill="none" /><path d="M11.500 1.500l1-1l1 1M11.500 4.500l1 1l1-1M11 2l-1 1l1 1M14 2l1 1l-1 1" stroke="#ff0000" stroke-width="0.7" fill="none" /></svg><svg class="ic" style="left:253px;top:5px" viewBox="0 0 16 16" width="16" height="16" shape-rendering="crispEdges"><circle cx="6.5" cy="6.5" r="5" fill="#f4f4f4" stroke="#9e9e9e" stroke-width="1.2"/><path d="M10.500 10.500l4 4" stroke="#9e9e9e" stroke-width="1.8" fill="none" /></svg><svg class="ic" style="left:276px;top:5px" viewBox="0 0 16 16" width="16" height="16" shape-rendering="crispEdges"><path d="M8 1l5 11c-2 3-8 3-10 0z" stroke="#9e9e9e" stroke-width="0.8" fill="#b8b8b8" /><path d="M8 1l-1 13" stroke="#9e9e9e" stroke-width="0.8" fill="none" /><path d="M8 1l-5 11c1 1.500 3 2 4 2z" stroke="#9e9e9e" stroke-width="0.3" fill="#9e9e9e" /></svg><div class="sep" style="left:501px;top:2px"></div><svg class="ic" style="left:506px;top:5px" viewBox="0 0 16 16" width="16" height="16" shape-rendering="crispEdges"><text x="8" y="14.5" font-family="Liberation Sans,sans-serif" font-weight="bold" font-size="17" text-anchor="middle" fill="#00c8d8">?</text><text x="7.2" y="13.8" font-family="Liberation Sans,sans-serif" font-weight="bold" font-size="17" text-anchor="middle" fill="#c000c0">?</text><text x="7.600" y="14.200" font-family="Liberation Sans,sans-serif" font-weight="bold" font-size="15.500" text-anchor="middle" fill="#1010d0">?</text></svg><div class="abs" style="left:296px;top:3px;width:199px;height:20px;box-sizing:border-box;border:1px solid #b4b4b4;background:#e9e9e9;font-size:11.5px;line-height:19px;padding-left:4px;color:#111">1: DL<svg class="abs" style="right:5px;top:6px" width="9" height="7" viewBox="0 0 9 7"><path d="M1 1.2L4.5 5L8 1.2" fill="none" stroke="#404040" stroke-width="1.7"/></svg></div></div>
<div class="tb" style="left:0px;top:104px;width:202px"><div class="grip" style="left:2px"></div><div class="grip" style="left:6px"></div><svg class="ic" style="left:13px;top:5px" viewBox="0 0 16 16" width="16" height="16" shape-rendering="crispEdges"><path d="M2 13l9-10" stroke="#9e9e9e" stroke-width="2.2" fill="none" /><rect x="9" y="9" width="5" height="5" fill="#9e9e9e"/><path d="M7 10l2-2" stroke="#9e9e9e" stroke-width="1" fill="none" /></svg><svg class="ic" style="left:36px;top:5px" viewBox="0 0 16 16" width="16" height="16" shape-rendering="crispEdges"><path d="M2 3h9v2h-2v3h3v3h-7l-2-2h-1z" stroke="#9e9e9e" stroke-width="0.5" fill="#9e9e9e" /><rect x="10" y="10" width="4.5" height="4.5" fill="#9e9e9e"/><path d="M1 5l3-3" stroke="#9e9e9e" stroke-width="1.5" fill="none" /></svg><svg class="ic" style="left:59px;top:5px" viewBox="0 0 16 16" width="16" height="16" shape-rendering="crispEdges"><path d="M2 3l3 2l3-2l3 2l2-2v4l-2 1l2 2l-2 2l-3-1l-3 2l-3-2l-1-2l2-2l-2-2z" stroke="#9e9e9e" stroke-width="0.5" fill="#9e9e9e" /><path d="M2 8h12" stroke="#b8b8b8" stroke-width="0.8" fill="none" /></svg><svg class="ic" style="left:82px;top:5px" viewBox="0 0 16 16" width="16" height="16" shape-rendering="crispEdges"><path d="M2 10l4-7h7v7l-4 4h-7z" stroke="#9e9e9e" stroke-width="0.5" fill="#9e9e9e" /><path d="M10 14l4-4v4z" stroke="#8c8c8c" stroke-width="0.3" fill="#8c8c8c" /></svg><svg class="ic" style="left:105px;top:5px" viewBox="0 0 16 16" width="16" height="16" shape-rendering="crispEdges"><rect x="1.5" y="1.5" width="11" height="11" fill="#ececec" stroke="#9e9e9e" stroke-width="1"/><path d="M1.500 5h11M1.500 8.500h11M5 1.500v11M8.500 1.500v11" stroke="#9e9e9e" stroke-width="0.9" fill="none" /><path d="M6 13l7-8" stroke="#9e9e9e" stroke-width="2" fill="none" /><rect x="10.5" y="10.5" width="4" height="4" fill="#9e9e9e"/></svg><svg class="ic" style="left:128px;top:5px" viewBox="0 0 16 16" width="16" height="16" shape-rendering="crispEdges"><path d="M1 11h5" stroke="#9e9e9e" stroke-width="1" fill="none" stroke-dasharray="1 1"/><circle cx="8.5" cy="11" r="2.2" fill="#9e9e9e"/><path d="M11 11h3" stroke="#9e9e9e" stroke-width="1" fill="none" /><rect x="9" y="2" width="4" height="4" fill="#9e9e9e"/><path d="M11 1v6M8.500 4h5" stroke="#9e9e9e" stroke-width="0.7" fill="none" /></svg><svg class="ic" style="left:151px;top:5px" viewBox="0 0 16 16" width="16" height="16" shape-rendering="crispEdges"><circle cx="8" cy="8" r="6.5" fill="#ececec" stroke="#9e9e9e" stroke-width="1.2"/><circle cx="8" cy="8" r="3" fill="none" stroke="#9e9e9e" stroke-width="1"/><path d="M8 1.500v3.500M8 11v3.500M1.500 8h3.500M11 8h3.500M3.500 3.500l2.500 2.500M10 10l2.500 2.500M12.500 3.500l-2.500 2.500M6 10l-2.500 2.500" stroke="#9e9e9e" stroke-width="0.9" fill="none" /></svg><svg class="ic" style="left:174px;top:5px" viewBox="0 0 16 16" width="16" height="16" shape-rendering="crispEdges"><rect x="1.5" y="1.5" width="12" height="12" fill="#ececec" stroke="#9e9e9e" stroke-width="1"/><path d="M1.500 5h12M1.500 9h12M5.500 1.500v12M9.500 1.500v12" stroke="#9e9e9e" stroke-width="0.9" fill="none" /><rect x="7" y="8" width="6" height="5.5" fill="#9e9e9e"/></svg></div>
<div class="tb" style="left:202px;top:104px;width:157px"><div class="grip" style="left:3px"></div><div class="grip" style="left:7px"></div><svg class="ic" style="left:15px;top:5px" viewBox="0 0 16 16" width="16" height="16" shape-rendering="crispEdges"><rect x="1.5" y="8.5" width="9" height="5.5" fill="#ececec" stroke="#9e9e9e" stroke-width="1"/><path d="M4.500 8.500v5.500M7.500 8.500v5.500" stroke="#9e9e9e" stroke-width="0.9" fill="none" /><path d="M8 3l6 10" stroke="#9e9e9e" stroke-width="1.8" fill="none" /><path d="M9 1.500l4-1M8 0.500l3 0.500" stroke="#9e9e9e" stroke-width="0.8" fill="none" stroke-dasharray="1 1"/></svg><svg class="ic" style="left:38px;top:5px" viewBox="0 0 16 16" width="16" height="16" shape-rendering="crispEdges"><circle cx="4.5" cy="11.5" r="3" fill="#ececec" stroke="#9e9e9e" stroke-width="1"/><circle cx="4.5" cy="11.5" r="1" fill="#9e9e9e"/><path d="M7 4l7 9" stroke="#9e9e9e" stroke-width="1.8" fill="none" /><path d="M9 1.500l4-1" stroke="#9e9e9e" stroke-width="0.8" fill="none" stroke-dasharray="1 1"/></svg><svg class="ic" style="left:61px;top:5px" viewBox="0 0 16 16" width="16" height="16" shape-rendering="crispEdges"><path d="M1 8h14" stroke="#9e9e9e" stroke-width="1" fill="none" /><path d="M5 2v12M8 1v14M11 2v12" stroke="#9e9e9e" stroke-width="0.9" fill="none" /><path d="M3 5l2 6M13 5l-2 6" stroke="#9e9e9e" stroke-width="0.9" fill="none" /></svg><svg class="ic" style="left:84px;top:5px" viewBox="0 0 16 16" width="16" height="16" shape-rendering="crispEdges"><path d="M12 4a5.500 5.500 0 1 0 1.500 5.500" fill="none" stroke="#9e9e9e" stroke-width="1.2"/><path d="M8 9h6v5" stroke="#9e9e9e" stroke-width="1.2" fill="none" /><path d="M12 12l2 2.500l2-2.500" stroke="#9e9e9e" stroke-width="0.1" fill="#9e9e9e" /></svg><svg class="ic" style="left:107px;top:5px" viewBox="0 0 16 16" width="16" height="16" shape-rendering="crispEdges"><rect x="1.5" y="1.5" width="13" height="13" fill="#ececec" stroke="#9e9e9e" stroke-width="1"/><path d="M1.500 5h13M5.500 1.500v13M10.500 1.500v13" stroke="#9e9e9e" stroke-width="1" fill="none" /><rect x="5.5" y="5" width="5" height="9.5" fill="#9e9e9e"/></svg><svg class="ic" style="left:130px;top:5px" viewBox="0 0 16 16" width="16" height="16" shape-rendering="crispEdges"><path d="M1 14l5-5" stroke="#9e9e9e" stroke-width="1" fill="none" stroke-dasharray="2 1"/><path d="M6 9l5-6" stroke="#9e9e9e" stroke-width="1.2" fill="none" /><path d="M8 1l7 8" stroke="#9e9e9e" stroke-width="1.2" fill="none" /></svg></div>
<div class="tb" style="left:359px;top:104px;width:527px"><div class="grip" style="left:3px"></div><div class="grip" style="left:7px"></div><svg class="ic" style="left:14px;top:5px" viewBox="0 0 16 16" width="16" height="16" shape-rendering="crispEdges"><path d="M0.500 4.500l3 3.500l-3 3.500z" stroke="#9e9e9e" stroke-width="0.3" fill="#9e9e9e" /><path d="M15.500 4.500l-3 3.500l3 3.500z" stroke="#9e9e9e" stroke-width="0.3" fill="#9e9e9e" /><text x="4.5" y="11" font-family="Liberation Sans,sans-serif" font-size="9" fill="#9e9e9e">F</text><text x="9.5" y="13" font-family="Liberation Sans,sans-serif" font-size="6.5" fill="#9e9e9e">x</text></svg><svg class="ic" style="left:37px;top:5px" viewBox="0 0 16 16" width="16" height="16" shape-rendering="crispEdges"><text x="0" y="8" font-family="Liberation Sans,sans-serif" font-size="9" fill="#9e9e9e">F</text><text x="5" y="9.5" font-family="Liberation Sans,sans-serif" font-size="6.5" fill="#9e9e9e">y</text><path d="M11 15v-10" stroke="#9e9e9e" stroke-width="1.2" fill="none" /><path d="M11 2l3.500 4.500h-3.500z" stroke="#9e9e9e" stroke-width="0.3" fill="#9e9e9e" /></svg><svg class="ic" style="left:60px;top:5px" viewBox="0 0 16 16" width="16" height="16" shape-rendering="crispEdges"><path d="M1 4.500h11" stroke="#9e9e9e" stroke-width="1.2" fill="none" /><path d="M11 1.500l4.500 3l-4.500 3z" stroke="#9e9e9e" stroke-width="0.3" fill="#9e9e9e" /><text x="6" y="14.5" font-family="Liberation Sans,sans-serif" font-size="9" fill="#9e9e9e">F</text><text x="11.5" y="15" font-family="Liberation Sans,sans-serif" font-size="6.5" fill="#9e9e9e">z</text></svg><svg class="ic" style="left:83px;top:5px" viewBox="0 0 16 16" width="16" height="16" shape-rendering="crispEdges"><path d="M13.500 6a6.500 6.500 0 1 0 0 5" fill="none" stroke="#9e9e9e" stroke-width="1" stroke-dasharray="2 1"/><text x="3.5" y="11.5" font-family="Liberation Sans,sans-serif" font-size="9" fill="#9e9e9e">M</text><text x="10.5" y="13" font-family="Liberation Sans,sans-serif" font-size="6" fill="#9e9e9e">x</text><path d="M11 2l4 0.500l-2 3.500z" stroke="#9e9e9e" stroke-width="0.3" fill="#9e9e9e" /></svg><svg class="ic" style="left:106px;top:5px" viewBox="0 0 16 16" width="16" height="16" shape-rendering="crispEdges"><path d="M1 11l9-7M3 12l9-6" stroke="#9e9e9e" stroke-width="1" fill="none" /><path d="M7 2h8l-5 3" stroke="#9e9e9e" stroke-width="0.8" fill="none" /><text x="5" y="15.5" font-family="Liberation Sans,sans-serif" font-size="8" fill="#9e9e9e">M</text><text x="11.5" y="15.5" font-family="Liberation Sans,sans-serif" font-size="6" fill="#9e9e9e">y</text></svg><svg class="ic" style="left:129px;top:5px" viewBox="0 0 16 16" width="16" height="16" shape-rendering="crispEdges"><text x="0" y="7" font-family="Liberation Sans,sans-serif" font-size="9" fill="#9e9e9e">M</text><text x="7" y="8" font-family="Liberation Sans,sans-serif" font-size="6.5" fill="#9e9e9e">z</text><path d="M2 13.500l11-5" stroke="#9e9e9e" stroke-width="1" fill="none" /><path d="M4 11v3M6.500 10v3M9 9v3M11.500 8v3M13 7.500l1.500-1.500l1 2z" stroke="#9e9e9e" stroke-width="0.9" fill="none" /></svg><svg class="ic" style="left:152px;top:5px" viewBox="0 0 16 16" width="16" height="16" shape-rendering="crispEdges"><path d="M2 7c0-4 3-5 6-5h6l1 3l-4 6l-4 3h-4l2-3c-2 0-3-2-3-4z" stroke="#8c8c8c" stroke-width="0.5" fill="#8c8c8c" /><rect x="6" y="4.5" width="4" height="3.5" fill="#d8d8d8"/><path d="M5 12l6-6" stroke="#b8b8b8" stroke-width="0.8" fill="none" /></svg><svg class="ic" style="left:175px;top:5px" viewBox="0 0 16 16" width="16" height="16" shape-rendering="crispEdges"><rect x="5.5" y="6" width="9.5" height="9" fill="#000"/><rect x="6.5" y="7" width="2.7" height="7" fill="#e00000"/><rect x="9" y="7" width="2.7" height="7" fill="#00c000"/><rect x="11.5" y="7" width="2.7" height="7" fill="#0000ff"/><path d="M6 7l8 8v-8z" stroke="#00c0c0" stroke-width="0.1" fill="#00a0e0" opacity="0.5"/><path d="M14.500 2.500h-7.500a3.500 3.500 0 1 0 0.100 7a3.500 3.500 0 1 0 0-7" fill="none" stroke="#e8d800" stroke-width="1.8"/><path d="M14.500 2.500h-7.500a3.500 3.500 0 1 0 0.100 7a3.500 3.500 0 1 0 0-7" fill="none" stroke="#806000" stroke-width="0.4"/></svg><svg class="ic" style="left:198px;top:5px" viewBox="0 0 16 16" width="16" height="16" shape-rendering="crispEdges"><path d="M3 3c2-2 6-2 8 0c3 0 4 2 4 4s-1 3-2 3c0 3-3 5-6 4c-3 0-5-2-5-4c-2-2-1-5 1-7z" stroke="#8c8c8c" stroke-width="0.5" fill="#8c8c8c" /><text x="4" y="8" font-family="Liberation Sans,sans-serif" font-size="6" fill="#e8e8e8">F</text></svg><svg class="ic" style="left:221px;top:5px" viewBox="0 0 16 16" width="16" height="16" shape-rendering="crispEdges"><path d="M1.500 12c0-4 4-8 8-9c2 0 3 1 3 2c-1 4-5 8-9 9c-1 0-2-1-2-2z" stroke="#9e9e9e" stroke-width="1" fill="none" /><path d="M7 13l3-9" stroke="#9e9e9e" stroke-width="0.9" fill="none" /><path d="M12 3l3-1" stroke="#9e9e9e" stroke-width="1" fill="none" /></svg><svg class="ic" style="left:244px;top:5px" viewBox="0 0 16 16" width="16" height="16" shape-rendering="crispEdges"><ellipse cx="5.500" cy="4.500" rx="3" ry="3.500" fill="none" stroke="#9e9e9e" stroke-width="1"/><ellipse cx="10" cy="11" rx="3" ry="3.500" fill="none" stroke="#9e9e9e" stroke-width="1"/><path d="M7.500 1v14" stroke="#9e9e9e" stroke-width="1" fill="none" /></svg><div class="abs" style="left:265px;top:3px;width:89px;height:20px;box-sizing:border-box;border:1px solid #d9d9d9;background:#efefef"><svg class="abs" style="right:5px;top:6px" width="9" height="7" viewBox="0 0 9 7"><path d="M1 1.2L4.5 5L8 1.2" fill="none" stroke="#b8b8b8" stroke-width="1.7"/></svg></div><svg class="ic" style="left:356px;top:5px" viewBox="0 0 16 16" width="16" height="16" shape-rendering="crispEdges"><rect x="0.5" y="2.5" width="15" height="11" fill="#404040" stroke="#000" stroke-width="1"/><rect x="2.5" y="4.5" width="9.5" height="7" fill="#00e0e0" stroke="#fff" stroke-width="0.6"/><path d="M13.200 5v1M13.200 7.500v1M13.200 10v1" stroke="#c0c0c0" stroke-width="1" fill="none" /></svg><svg class="ic" style="left:379px;top:5px" viewBox="0 0 16 16" width="16" height="16" shape-rendering="crispEdges"><rect x="1.5" y="0.5" width="13" height="15" fill="#fff" stroke="#0000a0" stroke-width="1.4"/><rect x="1.5" y="0.5" width="13" height="3" fill="#0000a0"/><path d="M3.500 2h1M6 2h1M8.500 2h1" stroke="#fff" stroke-width="0.9" fill="none" /><text x="8" y="13.500" font-family="Liberation Sans,sans-serif" font-weight="bold" font-size="11" text-anchor="middle" fill="#000">?</text></svg><div class="abs" style="left:400px;top:3px;width:79px;height:22px;box-sizing:border-box;border:1px solid;border-color:#606060 #d0d0d0 #d0d0d0 #606060;background:#f0f0f0"><div style="width:100%;height:100%;box-sizing:border-box;border:1px solid;border-color:#a0a0a0 #f8f8f8 #f8f8f8 #a0a0a0"></div></div><div class="abs" style="left:482px;top:3px;width:13px;height:20px;background:#ececec"></div><svg class="abs" style="left:485px;top:6px" width="7" height="14" viewBox="0 0 7 14"><path d="M1 4L3.5 1L6 4zM1 10L3.5 13L6 10z" fill="#9a9a9a"/></svg><div class="abs" style="left:499px;top:3px;width:20px;height:20px;background:#ececec"></div><svg class="ic" style="left:502px;top:5px" viewBox="0 0 16 16" width="16" height="16" shape-rendering="crispEdges"><path d="M6.5 2h3v4h2.5l-4 4.5l-4-4.5h2.500z" stroke="#9e9e9e" stroke-width="0.5" fill="#9e9e9e" /><rect x="4" y="12.5" width="8" height="1.3" fill="#9e9e9e"/></svg></div>
<div class="tb" style="left:0px;top:134px;width:64px"><div class="grip" style="left:2px"></div><div class="grip" style="left:6px"></div><svg class="ic" style="left:13px;top:5px" viewBox="0 0 16 16" width="16" height="16" shape-rendering="crispEdges"><rect x="2" y="1.5" width="8" height="11" fill="#9e9e9e"/><ellipse cx="10.500" cy="10" rx="4" ry="1.800" fill="#ececec" stroke="#9e9e9e" stroke-width="1"/><path d="M6.500 10v3.500c0 2.500 8 2.500 8 0v-3.500" stroke="#9e9e9e" stroke-width="1" fill="#ececec" /></svg><svg class="ic" style="left:36px;top:5px" viewBox="0 0 16 16" width="16" height="16" shape-rendering="crispEdges"><path d="M3 2l3 5M7 1v6M11 2l-3 5M2 4l4 3" stroke="#9e9e9e" stroke-width="1" fill="none" /><ellipse cx="8" cy="9" rx="5.500" ry="2" fill="#ececec" stroke="#9e9e9e" stroke-width="1"/><path d="M2.500 9v4c0 2.700 11 2.700 11 0v-4" stroke="#9e9e9e" stroke-width="1" fill="#ececec" /><path d="M3 1.500h3v2h-3z" stroke="#9e9e9e" stroke-width="0.8" fill="none" /></svg></div>
<div class="abs" style="left:0;top:164px;width:29px;height:544px;background:#f0f0f0"></div>
<div class="abs" style="left:2px;top:168px;width:25px;height:3px;box-sizing:border-box;border-top:1px solid #fff;border-bottom:1px solid #9a9a9a"></div><div class="abs" style="left:2px;top:171px;width:25px;height:3px;box-sizing:border-box;border-top:1px solid #fff;border-bottom:1px solid #9a9a9a"></div>
<svg class="ic" style="left:6px;top:179px" viewBox="0 0 16 16" width="16" height="16" shape-rendering="crispEdges"><path d="M2 1v11l3-3l2 5l1.500-0.700l-2-4.800h4z" stroke="#9e9e9e" stroke-width="1" fill="#f4f4f4" /><circle cx="12" cy="12" r="2.5" fill="#9e9e9e"/><circle cx="12" cy="12" r="1" fill="#d8d8d8"/></svg>
<svg class="ic" style="left:6px;top:201px" viewBox="0 0 16 16" width="16" height="16" shape-rendering="crispEdges"><path d="M5 2v11l3-3l2 5l1.500-0.700l-2-4.800h4z" stroke="#9e9e9e" stroke-width="1" fill="#fff" /></svg>
<svg class="ic" style="left:6px;top:223px" viewBox="0 0 16 16" width="16" height="16" shape-rendering="crispEdges"><path d="M1 1l13 13" stroke="#9e9e9e" stroke-width="1" fill="none" /><path d="M2 14v-8l5 4l2-5l2 2l3-3v10z" stroke="#9e9e9e" stroke-width="0.5" fill="#9e9e9e" /><path d="M1 1v9l3-2" stroke="#9e9e9e" stroke-width="1" fill="#f4f4f4" /></svg>
<svg class="ic" style="left:6px;top:245px" viewBox="0 0 16 16" width="16" height="16" shape-rendering="crispEdges"><rect x="3" y="3" width="11" height="11" fill="#9e9e9e"/><path d="M1 1v9l3-2l2 3M1 1l7 6" stroke="#9e9e9e" stroke-width="1" fill="#f4f4f4" /><path d="M3 3l8 1l-8 8z" stroke="#d0d0d0" stroke-width="0.1" fill="#d4d4d4" /></svg>
<svg class="ic" style="left:6px;top:267px" viewBox="0 0 16 16" width="16" height="16" shape-rendering="crispEdges"><path d="M2 14l2-6l4 2l2-6l4 1v9z" stroke="#9e9e9e" stroke-width="0.5" fill="#9e9e9e" /><path d="M1 1l6 6M9 3l4 3M3 8l4 4" stroke="#9e9e9e" stroke-width="1.6" fill="none" /><path d="M1 1v8l3-2" stroke="#9e9e9e" stroke-width="1" fill="#f4f4f4" /></svg>
<svg class="ic" style="left:6px;top:289px" viewBox="0 0 16 16" width="16" height="16" shape-rendering="crispEdges"><path d="M2 1v11l3-3l2 5l1.500-0.700l-2-4.800h4z" stroke="#9e9e9e" stroke-width="1" fill="#f4f4f4" /><path d="M8 11l5-6l2 2l-5 6zM8 14l3-1" stroke="#9e9e9e" stroke-width="0.6" fill="#9e9e9e" /><circle cx="12" cy="3.5" r="2" fill="#9e9e9e"/></svg>
<svg class="ic" style="left:6px;top:311px" viewBox="0 0 16 16" width="16" height="16" shape-rendering="crispEdges"><path d="M8 15l-4-10M4 5l8 8M4 5l-3-4" stroke="#9e9e9e" stroke-width="1" fill="none" /><path d="M2 12c3-3 7-3 10 0" stroke="#9e9e9e" stroke-width="1" fill="none" /><path d="M3 3l2 0M3 3l0 2" stroke="#9e9e9e" stroke-width="1" fill="none" /></svg>
<svg class="ic" style="left:6px;top:333px" viewBox="0 0 16 16" width="16" height="16" shape-rendering="crispEdges"><path d="M1 2v12M1 3h13M1 7h13M1 11h8" stroke="#9e9e9e" stroke-width="1" fill="none" /><path d="M5 3v11M9 3v11M13 3v6" stroke="#9e9e9e" stroke-width="0.9" fill="none" /><path d="M10 10l4 4" stroke="#9e9e9e" stroke-width="1.5" fill="none" /></svg>
<svg class="ic" style="left:6px;top:355px" viewBox="0 0 16 16" width="16" height="16" shape-rendering="crispEdges"><path d="M2 1v11l3-3l2 5l1.500-0.700l-2-4.800h4z" stroke="#9e9e9e" stroke-width="1" fill="#f4f4f4" /><path d="M6 13l4-7l4 7z" stroke="#9e9e9e" stroke-width="0.4" fill="#9e9e9e" /><circle cx="10" cy="4" r="1.8" fill="#9e9e9e"/><path d="M5 14.500h10" stroke="#9e9e9e" stroke-width="1" fill="none" stroke-dasharray="1 1"/></svg>
<svg class="ic" style="left:6px;top:377px" viewBox="0 0 16 16" width="16" height="16" shape-rendering="crispEdges"><path d="M2 1v11l3-3l2 5l1.500-0.700l-2-4.800h4z" stroke="#9e9e9e" stroke-width="1" fill="#f4f4f4" /><path d="M7 14l7-9" stroke="#9e9e9e" stroke-width="1.2" fill="none" /><path d="M10 13c2 1 4 0 5-2" stroke="#9e9e9e" stroke-width="1" fill="none" /><circle cx="8" cy="13" r="1.5" fill="none" stroke="#9e9e9e" stroke-width="0.8"/></svg>
<svg class="ic" style="left:6px;top:399px" viewBox="0 0 16 16" width="16" height="16" shape-rendering="crispEdges"><path d="M8 2v12M2 8h12" stroke="#9e9e9e" stroke-width="3.5" fill="none" /><path d="M8 2v12M2 8h12" stroke="#c8c8c8" stroke-width="1" fill="none" /></svg>
<svg class="ic" style="left:6px;top:421px" viewBox="0 0 16 16" width="16" height="16" shape-rendering="crispEdges"><path d="M2 1v11l3-3l2 5l1.500-0.700l-2-4.800h4z" stroke="#9e9e9e" stroke-width="1" fill="#f4f4f4" /><rect x="8" y="7" width="7" height="6" fill="#9e9e9e"/><path d="M8 7l2-2h5v6l-2 2" stroke="#9e9e9e" stroke-width="0.8" fill="#b8b8b8" /></svg>
<div class="abs" style="left:3px;top:199px;width:23px;height:22px;box-sizing:border-box;border:1px solid;border-color:#a0a0a0 #fff #fff #a0a0a0;background:#f8f8f8"></div><svg class="ic" style="left:6px;top:201px" viewBox="0 0 16 16" width="16" height="16" shape-rendering="crispEdges"><path d="M5 2v11l3-3l2 5l1.500-0.700l-2-4.800h4z" stroke="#9e9e9e" stroke-width="1" fill="#fff" /></svg>
<div class="abs" style="left:0;top:448px;width:28px;height:2px;box-sizing:border-box;border-top:1px solid #a6a6a6;border-bottom:1px solid #fff"></div>
<div class="abs" style="left:2px;top:453px;width:25px;height:3px;box-sizing:border-box;border-top:1px solid #fff;border-bottom:1px solid #9a9a9a"></div><div class="abs" style="left:2px;top:456px;width:25px;height:3px;box-sizing:border-box;border-top:1px solid #fff;border-bottom:1px solid #9a9a9a"></div>
<svg class="ic" style="left:6px;top:462px" viewBox="0 0 16 16" width="16" height="16" shape-rendering="crispEdges"><path d="M2 6l6-4l6 4" stroke="#9e9e9e" stroke-width="1.2" fill="none" /><path d="M6 5l3-2l3 2v2" stroke="#9e9e9e" stroke-width="1" fill="#b8b8b8" /><rect x="2" y="9" width="12" height="5" fill="#9e9e9e"/></svg>
<svg class="ic" style="left:6px;top:484px" viewBox="0 0 16 16" width="16" height="16" shape-rendering="crispEdges"><path d="M3 1v10l3-2.500l2 4" stroke="#9e9e9e" stroke-width="1" fill="#f4f4f4" /><path d="M3 1l7 7h-4" stroke="#9e9e9e" stroke-width="1" fill="none" /><rect x="4" y="12" width="11" height="3" fill="#9e9e9e"/><path d="M8 11l6-5" stroke="#9e9e9e" stroke-width="1" fill="none" /></svg>
<svg class="ic" style="left:6px;top:506px" viewBox="0 0 16 16" width="16" height="16" shape-rendering="crispEdges"><path d="M2 4v4M14 4v4M2 6h12M4.500 4.500l-2.500 1.500l2.500 1.500M11.500 4.500l2.500 1.500l-2.500 1.500" stroke="#9e9e9e" stroke-width="1.1" fill="none" /><rect x="1.5" y="9.5" width="3" height="5" fill="#9e9e9e"/><rect x="11.5" y="9.5" width="3" height="5" fill="#9e9e9e"/><path d="M4 13h8" stroke="#9e9e9e" stroke-width="1.5" fill="none" /></svg>
<svg class="ic" style="left:6px;top:527px" viewBox="0 0 16 16" width="16" height="16" shape-rendering="crispEdges"><rect x="1.5" y="2" width="3" height="12" fill="#9e9e9e"/><rect x="11.5" y="2" width="3" height="12" fill="#9e9e9e"/><path d="M4 11h8" stroke="#9e9e9e" stroke-width="2" fill="none" /><text x="4.2" y="8.5" font-family="Liberation Sans,sans-serif" font-size="6" fill="#9e9e9e">AF</text></svg>
<svg class="ic" style="left:6px;top:549px" viewBox="0 0 16 16" width="16" height="16" shape-rendering="crispEdges"><path d="M1 5l4-2h9v8l-4 3h-9z" stroke="#9e9e9e" stroke-width="0.5" fill="#9e9e9e" /><path d="M3 3l2 1M7 2v2M11 2l1 2" stroke="#9e9e9e" stroke-width="1" fill="none" /></svg>
<svg class="ic" style="left:6px;top:571px" viewBox="0 0 16 16" width="16" height="16" shape-rendering="crispEdges"><path d="M2 5l3-3h9v9l-3 3h-9z" stroke="#9e9e9e" stroke-width="0.5" fill="#9e9e9e" /><path d="M2 5h9v9M11 5l3-3" stroke="#8a8a8a" stroke-width="0.8" fill="none" /></svg>
<svg class="ic" style="left:6px;top:592px" viewBox="0 0 16 16" width="16" height="16" shape-rendering="crispEdges"><path d="M4 2h9v11h-9z" stroke="#9e9e9e" stroke-width="1" fill="#f4f4f4" /><path d="M2 4h9v11h-9z" stroke="#9e9e9e" stroke-width="1" fill="#f4f4f4" /><path d="M4 7h5M4 9h5M4 11h5M4 13h5" stroke="#9e9e9e" stroke-width="0.9" fill="none" /></svg>
<div class="abs" style="left:0;top:618px;width:28px;height:2px;box-sizing:border-box;border-top:1px solid #a6a6a6;border-bottom:1px solid #fff"></div>
<div class="abs" style="left:2px;top:623px;width:25px;height:3px;box-sizing:border-box;border-top:1px solid #fff;border-bottom:1px solid #9a9a9a"></div><div class="abs" style="left:2px;top:626px;width:25px;height:3px;box-sizing:border-box;border-top:1px solid #fff;border-bottom:1px solid #9a9a9a"></div>
<svg class="ic" style="left:6px;top:634px" viewBox="0 0 16 16" width="16" height="16" shape-rendering="crispEdges"><path d="M2 1v11l3-3l2 5l1.500-0.700l-2-4.800h4z" stroke="#9e9e9e" stroke-width="1" fill="#f4f4f4" /><circle cx="12" cy="12" r="2.5" fill="#9e9e9e"/><rect x="8" y="2" width="6" height="3" fill="none" stroke="#9e9e9e" stroke-width="1"/></svg>
<svg class="ic" style="left:6px;top:656px" viewBox="0 0 16 16" width="16" height="16" shape-rendering="crispEdges"><path d="M2 1v11l3-3l2 5l1.500-0.700l-2-4.800h4z" stroke="#9e9e9e" stroke-width="1" fill="#f4f4f4" /><path d="M8 12l6-7v5l-4 4z" stroke="#9e9e9e" stroke-width="0.8" fill="#b8b8b8" /><path d="M8 3h6" stroke="#9e9e9e" stroke-width="1" fill="none" /></svg>
<svg class="ic" style="left:6px;top:678px" viewBox="0 0 16 16" width="16" height="16" shape-rendering="crispEdges"><path d="M2 1v11l3-3l2 5l1.500-0.700l-2-4.800h4z" stroke="#9e9e9e" stroke-width="1" fill="#f4f4f4" /><rect x="9" y="9" width="5" height="5" fill="#9e9e9e"/><rect x="8" y="2" width="6" height="3" fill="none" stroke="#9e9e9e" stroke-width="1"/></svg>
<svg class="ic" style="left:6px;top:700px" viewBox="0 0 16 16" width="16" height="16" shape-rendering="crispEdges"><path d="M2 1v11l3-3l2 5l1.500-0.700l-2-4.800h4z" stroke="#9e9e9e" stroke-width="1" fill="#f4f4f4" /><path d="M8 4h6v3h-6z" stroke="#9e9e9e" stroke-width="1" fill="none" /><path d="M6 14h9" stroke="#9e9e9e" stroke-width="1" fill="none" /></svg>
<div class="abs" style="left:29px;top:164px;width:1px;height:544px;background:#a6a6a6"></div>
<div class="abs" style="left:0;top:163px;width:1365px;height:1px;background:#c0c0c0"></div><div class="abs" style="left:0;top:164px;width:1365px;height:1px;background:#fafafa"></div>
<div class="abs" style="left:31px;top:165px;width:1334px;height:26px;background:#00aaa8"></div>
<svg class="abs" style="left:31px;top:171px" width="42" height="20" viewBox="0 0 42 20"><path d="M0 20L9 0.5H40.5V20z" fill="#f0f0f0"/><path d="M0.5 20L9.5 1H40" fill="none" stroke="#fff" stroke-width="1"/></svg>
<div class="tab" style="left:40px;color:#000">建模</div>
<div class="tab" style="left:77px;color:#000">后处理</div>
<div class="tab" style="left:127px;color:#000">钢结构设计</div>
<div class="tab" style="left:203px;color:#000">混凝土设计</div>
<div class="tab" style="left:279px;color:#000">基础设计</div>
<div class="tab" style="left:342px;color:#000"><span style="font-family:Liberation Sans,sans-serif;font-size:12.5px;letter-spacing:-0.3px">RAM </span>连接设计</div>
<div class="tab" style="left:438px;color:#fff">桥面板</div>
<div class="tab" style="left:488px;color:#000">高级平板设计</div>
<div class="tab" style="left:576px;color:#000">管道</div>
<div class="tab" style="left:614px;color:#fff">地震</div>
<div class="tsep" style="left:119px"></div>
<div class="tsep" style="left:195px"></div>
<div class="tsep" style="left:271px"></div>
<div class="tsep" style="left:334px"></div>
<div class="tsep" style="left:430px"></div>
<div class="tsep" style="left:480px"></div>
<div class="tsep" style="left:569px"></div>
<div class="tsep" style="left:606px"></div>
<div class="abs" style="left:59px;top:195px;width:1px;height:513px;background:#808080"></div><div class="abs" style="left:60px;top:195px;width:1px;height:513px;background:#000"></div><div class="abs" style="left:61px;top:195px;width:1px;height:513px;background:#fff"></div>
<div class="abs" style="left:89px;top:195px;width:1276px;height:513px;background:#fff;border-left:1px solid #b0b0b0;border-top:1px solid #a8a8a8"></div>
<div class="abs" style="left:90px;top:196px;width:1px;height:512px;background:#000"></div><div class="abs" style="left:91px;top:196px;width:1px;height:512px;background:#606060"></div>
<div class="abs" style="left:92px;top:196px;width:1272px;height:1px;background:#707070"></div>
<div class="abs" style="left:1363px;top:196px;width:2px;height:512px;background:#f0f0f0;border-left:1px solid #d8d8d8;box-sizing:border-box"></div>
<div class="abs" style="left:34px;top:197px;width:25px;height:72px;box-sizing:border-box;border-left:1px solid #fff;border-bottom:2px solid #303030;border-radius:0 0 3px 3px;background:#f0f0f0"></div>
<div class="abs" style="left:64px;top:197px;width:25px;height:72px;box-sizing:border-box;border-left:1px solid #fff;border-bottom:2px solid #303030;border-radius:0 0 3px 3px;background:#f0f0f0"></div>
<div class="vt" style="left:36px;top:242px;font-weight:500">设置</div>
<div class="vt" style="left:66px;top:242px;font-weight:500">工程</div>
<div class="vt" style="left:39px;top:335px">几何建模</div>
<div class="vt" style="left:39px;top:430px">一般设置</div>
<div class="vt" style="left:39px;top:530px">分析/打印</div>
<div class="vt" style="left:39px;top:592px">设计</div>
<svg class="ic" style="left:39px;top:246px" viewBox="0 0 16 16" width="16" height="16" shape-rendering="crispEdges"><path d="M5 6h6M8 6v4" stroke="#000" stroke-width="1" fill="none" /><path d="M3 11l5-2l5 2l-5 1.500z" stroke="#ffff00" stroke-width="0.3" fill="#ffff00" /><path d="M6 9l2-2l2 2" stroke="#ff0000" stroke-width="1.2" fill="none" /></svg><svg class="ic" style="left:69px;top:246px" viewBox="0 0 16 16" width="16" height="16" shape-rendering="crispEdges"><path d="M8 3v8" stroke="#000" stroke-width="1" fill="none" stroke-dasharray="1.5 1.5"/><path d="M5 6c0-3 6-3 6 0c0 2-3 2-3 4" stroke="#000" stroke-width="1.2" fill="none" /><path d="M8 12.500v1.500" stroke="#000" stroke-width="1.4" fill="none" /></svg><svg class="ic" style="left:39px;top:340px" viewBox="0 0 16 16" width="16" height="16" shape-rendering="crispEdges"><path d="M5 3h6M5 8h6M5 13h6M8 3v10" stroke="#a00000" stroke-width="1.5" fill="none" /></svg><svg class="ic" style="left:39px;top:429px" viewBox="0 0 16 16" width="16" height="16" shape-rendering="crispEdges"><circle cx="8" cy="8" r="5" fill="#ffff00" stroke="#606000" stroke-width="0.8"/><circle cx="8" cy="8" r="1.5" fill="#000"/></svg><svg class="ic" style="left:39px;top:532px" viewBox="0 0 16 16" width="16" height="16" shape-rendering="crispEdges"><path d="M3 8l3-3h8v5l-3 3h-8z" stroke="#000080" stroke-width="0.6" fill="#4040c0" /><path d="M3 8h8v5M11 8l3-3" stroke="#fff" stroke-width="0.6" fill="none" /><path d="M9 4l5-3" stroke="#ffff00" stroke-width="1.2" fill="none" stroke-dasharray="1.5 1"/></svg><svg class="ic" style="left:39px;top:594px" viewBox="0 0 16 16" width="16" height="16" shape-rendering="crispEdges"><path d="M7 2v12M13 2v12M7 8h6" stroke="#000" stroke-width="1.8" fill="none" /><path d="M1 8h4M3.500 6l2 2l-2 2" stroke="#ff0000" stroke-width="1.3" fill="none" /></svg>
<div class="abs" style="left:36px;top:360px;width:20px;height:1px;background:#303030"></div>
<div class="abs" style="left:36px;top:452px;width:20px;height:1px;background:#303030"></div>
<div class="abs" style="left:36px;top:552px;width:20px;height:1px;background:#303030"></div>
<div class="abs" style="left:36px;top:616px;width:22px;height:2px;background:#303030;border-radius:0 0 2px 2px"></div>
<svg class="abs" style="left:92px;top:197px" width="1273" height="511" viewBox="0 0 1273 511" shape-rendering="crispEdges">
<defs><pattern id="gp" width="3" height="2" patternUnits="userSpaceOnUse"><rect width="3" height="2" fill="#846a6c"/><rect x="0" y="0" width="1.5" height="1" fill="#927878"/></pattern></defs>
<polygon points="281.5,210.2 807.1,64.6 801.0,189.0 312.0,375.5" fill="#d000da" />
<polygon points="889.6,99.1 811.9,79.0 807.1,173.8 881.1,199.1" fill="#fff" />
<line x1="290.5" y1="215.7" x2="314.9" y2="350.8" stroke="#cf6a2e" stroke-width="2" />
<line x1="350.6" y1="198.7" x2="370.7" y2="330.3" stroke="#cf6a2e" stroke-width="2" />
<line x1="364.2" y1="194.9" x2="383.3" y2="325.7" stroke="#cf6a2e" stroke-width="2" />
<line x1="405.4" y1="183.3" x2="421.7" y2="311.6" stroke="#cf6a2e" stroke-width="2" />
<line x1="418.0" y1="179.7" x2="433.5" y2="307.3" stroke="#cf6a2e" stroke-width="2" />
<line x1="456.5" y1="168.9" x2="469.5" y2="294.0" stroke="#cf6a2e" stroke-width="2" />
<line x1="468.3" y1="165.6" x2="480.6" y2="290.0" stroke="#cf6a2e" stroke-width="2" />
<line x1="504.5" y1="155.4" x2="514.5" y2="277.5" stroke="#cf6a2e" stroke-width="2" />
<line x1="515.5" y1="152.3" x2="524.9" y2="273.7" stroke="#cf6a2e" stroke-width="2" />
<line x1="549.5" y1="142.7" x2="556.9" y2="262.0" stroke="#cf6a2e" stroke-width="2" />
<line x1="559.9" y1="139.8" x2="566.7" y2="258.3" stroke="#cf6a2e" stroke-width="2" />
<line x1="622.5" y1="122.1" x2="626.0" y2="236.6" stroke="#cf6a2e" stroke-width="2" />
<line x1="631.9" y1="119.5" x2="634.9" y2="233.3" stroke="#cf6a2e" stroke-width="2" />
<line x1="688.5" y1="103.5" x2="688.6" y2="213.6" stroke="#cf6a2e" stroke-width="2" />
<line x1="697.0" y1="101.1" x2="696.7" y2="210.6" stroke="#cf6a2e" stroke-width="2" />
<line x1="748.3" y1="86.7" x2="745.8" y2="192.6" stroke="#cf6a2e" stroke-width="2" />
<line x1="756.1" y1="84.5" x2="753.2" y2="189.9" stroke="#cf6a2e" stroke-width="2" />
<line x1="285.5" y1="231.6" x2="806.3" y2="80.4" stroke="#cf6a2e" stroke-width="2" />
<polygon points="812.6,65.9 807.1,64.6 801.9,172.0 807.1,173.8" fill="#d96d3d" />
<polygon points="803.8,65.5 807.1,64.6 801.9,172.0 798.7,173.1" fill="#a4502e" />
<polygon points="555.2,147.8 635.3,180.6 638.3,300.7 561.9,260.1" fill="#a800b4" />
<polygon points="554.4,134.6 635.0,166.4 635.3,181.8 555.3,148.9" fill="#b85a32" />
<polygon points="554.4,134.6 635.0,166.4 638.3,165.4 557.6,133.7" fill="#e87a46" />
<line x1="315.8" y1="230.2" x2="581.4" y2="151.9" stroke="url(#gp)" stroke-width="4.8" />
<line x1="337.7" y1="245.2" x2="607.1" y2="162.3" stroke="url(#gp)" stroke-width="4.8" />
<line x1="429.0" y1="240.1" x2="357.6" y2="197.3" stroke="url(#gp)" stroke-width="5" />
<line x1="486.8" y1="221.4" x2="412.5" y2="181.8" stroke="url(#gp)" stroke-width="5" />
<line x1="539.8" y1="204.3" x2="463.3" y2="167.5" stroke="url(#gp)" stroke-width="5" />
<line x1="586.7" y1="189.2" x2="508.6" y2="154.7" stroke="url(#gp)" stroke-width="5" />
<line x1="710.4" y1="149.3" x2="629.1" y2="120.7" stroke="url(#gp)" stroke-width="4" />
<line x1="776.3" y1="128.0" x2="694.1" y2="102.4" stroke="url(#gp)" stroke-width="4" />
<line x1="836.1" y1="108.7" x2="753.5" y2="85.7" stroke="url(#gp)" stroke-width="4" />
<polygon points="281.5,210.2 807.1,64.6 806.8,70.2 282.9,217.8" fill="#d96d3d" />
<polygon points="281.5,210.2 807.1,64.6 811.8,65.7 285.2,212.7" fill="#e87a46" />
<polygon points="890.7,85.3 807.1,64.6 806.5,77.6 889.6,99.1" fill="#a4502e" />
<polygon points="890.7,85.3 807.1,64.6 805.7,65.0 889.3,85.7" fill="#e87a46" />
<line x1="605.2" y1="152.8" x2="846.7" y2="80.2" stroke="url(#gp)" stroke-width="3.8" />
<polygon points="349.3,257.1 890.7,85.3 875.1,269.1 388.0,502.8" fill="#d400d6" />
<line x1="363.9" y1="349.9" x2="885.0" y2="153.1" stroke="#9800b0" stroke-width="0.8" />
<line x1="376.1" y1="426.9" x2="880.1" y2="210.8" stroke="#9800b0" stroke-width="0.8" />
<line x1="369.8" y1="387.3" x2="639.4" y2="278.8" stroke="#9800b0" stroke-width="0.8" />
<line x1="639.4" y1="278.8" x2="882.6" y2="180.9" stroke="#b400c4" stroke-width="0.6" />
<line x1="429.6" y1="239.9" x2="456.0" y2="461.2" stroke="#a800c0" stroke-width="0.8" />
<line x1="486.6" y1="221.5" x2="506.6" y2="437.2" stroke="#a800c0" stroke-width="0.8" />
<line x1="539.6" y1="204.4" x2="553.9" y2="414.8" stroke="#a800c0" stroke-width="0.8" />
<line x1="588.9" y1="188.5" x2="598.3" y2="393.8" stroke="#a800c0" stroke-width="0.8" />
<line x1="635.0" y1="173.6" x2="640.0" y2="374.0" stroke="#a800c0" stroke-width="0.8" />
<line x1="709.3" y1="149.6" x2="707.8" y2="341.9" stroke="#a800c0" stroke-width="0.8" />
<line x1="775.8" y1="128.2" x2="769.0" y2="312.9" stroke="#a800c0" stroke-width="0.8" />
<line x1="835.6" y1="108.9" x2="824.6" y2="286.5" stroke="#a800c0" stroke-width="0.8" />
<line x1="358.7" y1="262.8" x2="393.6" y2="490.7" stroke="#a65428" stroke-width="3" />
<line x1="358.7" y1="262.8" x2="393.6" y2="490.7" stroke="#cf6a2e" stroke-width="2" />
<line x1="422.4" y1="242.2" x2="449.7" y2="464.2" stroke="#a65428" stroke-width="3" />
<line x1="422.4" y1="242.2" x2="449.7" y2="464.2" stroke="#cf6a2e" stroke-width="2" />
<line x1="436.7" y1="237.6" x2="462.3" y2="458.2" stroke="#a65428" stroke-width="3" />
<line x1="436.7" y1="237.6" x2="462.3" y2="458.2" stroke="#cf6a2e" stroke-width="2" />
<line x1="480.0" y1="223.6" x2="500.7" y2="440.0" stroke="#a65428" stroke-width="3" />
<line x1="480.0" y1="223.6" x2="500.7" y2="440.0" stroke="#cf6a2e" stroke-width="2" />
<line x1="493.2" y1="219.4" x2="512.5" y2="434.4" stroke="#a65428" stroke-width="3" />
<line x1="493.2" y1="219.4" x2="512.5" y2="434.4" stroke="#cf6a2e" stroke-width="2" />
<line x1="533.4" y1="206.4" x2="548.4" y2="417.4" stroke="#a65428" stroke-width="3" />
<line x1="533.4" y1="206.4" x2="548.4" y2="417.4" stroke="#cf6a2e" stroke-width="2" />
<line x1="545.7" y1="202.4" x2="559.4" y2="412.2" stroke="#a65428" stroke-width="3" />
<line x1="545.7" y1="202.4" x2="559.4" y2="412.2" stroke="#cf6a2e" stroke-width="2" />
<line x1="583.2" y1="190.3" x2="593.1" y2="396.2" stroke="#a65428" stroke-width="3" />
<line x1="583.2" y1="190.3" x2="593.1" y2="396.2" stroke="#cf6a2e" stroke-width="2" />
<line x1="594.6" y1="186.6" x2="603.5" y2="391.3" stroke="#a65428" stroke-width="3" />
<line x1="594.6" y1="186.6" x2="603.5" y2="391.3" stroke="#cf6a2e" stroke-width="2" />
<line x1="629.6" y1="175.3" x2="635.1" y2="376.3" stroke="#a65428" stroke-width="3" />
<line x1="629.6" y1="175.3" x2="635.1" y2="376.3" stroke="#cf6a2e" stroke-width="2" />
<line x1="640.3" y1="171.9" x2="644.9" y2="371.7" stroke="#a65428" stroke-width="3" />
<line x1="640.3" y1="171.9" x2="644.9" y2="371.7" stroke="#cf6a2e" stroke-width="2" />
<line x1="704.5" y1="151.2" x2="703.4" y2="344.0" stroke="#a65428" stroke-width="3" />
<line x1="704.5" y1="151.2" x2="703.4" y2="344.0" stroke="#cf6a2e" stroke-width="2" />
<line x1="714.0" y1="148.1" x2="712.2" y2="339.8" stroke="#a65428" stroke-width="3" />
<line x1="714.0" y1="148.1" x2="712.2" y2="339.8" stroke="#cf6a2e" stroke-width="2" />
<line x1="771.4" y1="129.6" x2="765.0" y2="314.8" stroke="#a65428" stroke-width="3" />
<line x1="771.4" y1="129.6" x2="765.0" y2="314.8" stroke="#cf6a2e" stroke-width="2" />
<line x1="780.0" y1="126.8" x2="773.0" y2="311.0" stroke="#a65428" stroke-width="3" />
<line x1="780.0" y1="126.8" x2="773.0" y2="311.0" stroke="#cf6a2e" stroke-width="2" />
<line x1="831.7" y1="110.1" x2="821.0" y2="288.3" stroke="#a65428" stroke-width="3" />
<line x1="831.7" y1="110.1" x2="821.0" y2="288.3" stroke="#cf6a2e" stroke-width="2" />
<line x1="839.5" y1="107.6" x2="828.2" y2="284.8" stroke="#a65428" stroke-width="3" />
<line x1="839.5" y1="107.6" x2="828.2" y2="284.8" stroke="#cf6a2e" stroke-width="2" />
<line x1="352.7" y1="278.5" x2="885.8" y2="101.9" stroke="#a65428" stroke-width="3" />
<line x1="352.7" y1="278.5" x2="885.8" y2="101.9" stroke="#e07c32" stroke-width="2" />
<line x1="362.9" y1="343.6" x2="881.8" y2="149.7" stroke="#a65428" stroke-width="3" />
<line x1="362.9" y1="343.6" x2="881.8" y2="149.7" stroke="#e07c32" stroke-width="2" />
<line x1="364.8" y1="355.8" x2="881.1" y2="158.7" stroke="#a65428" stroke-width="3" />
<line x1="364.8" y1="355.8" x2="881.1" y2="158.7" stroke="#e07c32" stroke-width="2" />
<line x1="375.1" y1="421.0" x2="877.0" y2="207.8" stroke="#a65428" stroke-width="3" />
<line x1="375.1" y1="421.0" x2="877.0" y2="207.8" stroke="#e07c32" stroke-width="2" />
<line x1="376.9" y1="432.4" x2="876.3" y2="216.4" stroke="#a65428" stroke-width="3" />
<line x1="376.9" y1="432.4" x2="876.3" y2="216.4" stroke="#e07c32" stroke-width="2" />
<line x1="385.4" y1="486.6" x2="872.8" y2="258.1" stroke="#a65428" stroke-width="3" />
<line x1="385.4" y1="486.6" x2="872.8" y2="258.1" stroke="#e07c32" stroke-width="2" />
<polygon points="349.3,257.1 890.7,85.3 890.2,91.6 350.7,265.9" fill="#d96d3d" />
<polygon points="349.3,257.1 890.7,85.3 884.9,83.8 344.5,253.7" fill="#e87a46" />
<line x1="349.3" y1="257.1" x2="890.7" y2="85.3" stroke="#c8622f" stroke-width="1" />
<polygon points="386.4,493.0 875.8,261.5 875.1,269.1 388.0,502.8" fill="#d96d3d" />
<polygon points="386.4,493.0 875.8,261.5 875.6,264.0 387.0,496.3" fill="#e87a46" />
<line x1="887.2" y1="92.2" x2="872.7" y2="265.4" stroke="#c4622f" stroke-width="3.4" />
<polygon points="889.0,89.0 891.0,87.5 894.8,90.0 880.0,261.0 874.5,264.0 873.2,261.0" fill="#a85030" />
<polygon points="889.0,89.0 890.6,88.5 875.0,261.0 873.2,261.0" fill="#d06a3a" />
<line x1="888.6" y1="94.0" x2="874.2" y2="255.0" stroke="#d400d6" stroke-width="1" stroke-dasharray="5 3"/>
<polygon points="282.5,214.0 349.8,258.0 390.0,503.0 323.4,439.0" fill="#dc7242" />
<polygon points="279.0,222.0 286.5,220.5 324.0,424.0 322.2,430.0 322.2,436.5 319.7,434.0" fill="#d96d3d" />
<polygon points="279.0,222.0 281.0,221.5 321.2,434.0 319.7,434.0" fill="#e88654" />
<polygon points="287.8,231.0 297.5,238.0 332.2,425.0 324.3,425.0" fill="#d400d6" />
<line x1="305.0" y1="331.5" x2="312.5" y2="330.0" stroke="#cf6a2e" stroke-width="2" />
<polygon points="316.5,250.0 321.9,253.0 357.2,464.0 351.3,460.0" fill="#b45a34" />
<line x1="319.2" y1="251.5" x2="354.2" y2="462.0" stroke="#cc6c40" stroke-width="1.6" stroke-dasharray="2 2"/>
<polygon points="337.2,266.0 342.5,269.0 380.4,484.0 372.5,479.0" fill="#b45a34" />
<line x1="339.8" y1="267.5" x2="376.5" y2="481.5" stroke="#cc6c40" stroke-width="1.6" stroke-dasharray="2 2"/>
<line x1="299.0" y1="239.0" x2="333.7" y2="427.0" stroke="#b86038" stroke-width="2.6" />
<line x1="299.0" y1="239.0" x2="333.7" y2="427.0" stroke="#d47a4c" stroke-width="1" stroke-dasharray="2 2"/>
<line x1="322.4" y1="255.5" x2="349.5" y2="419.0" stroke="#e8885a" stroke-width="1.2" />
<line x1="343.4" y1="271.0" x2="368.2" y2="419.0" stroke="#e8885a" stroke-width="1.2" />
<line x1="347.2" y1="269.0" x2="387.5" y2="500.0" stroke="#b45a34" stroke-width="2" stroke-dasharray="2 1.5"/>
<line x1="312.5" y1="329.6" x2="325.7" y2="327.0" stroke="#a85030" stroke-width="0.8" />
<line x1="331.5" y1="349.5" x2="345.0" y2="345.5" stroke="#a85030" stroke-width="0.8" />
<line x1="352.0" y1="368.0" x2="363.0" y2="364.5" stroke="#a85030" stroke-width="0.8" />
<polygon points="323.4,439.0 327.0,435.0 389.5,497.0 389.0,503.0" fill="#e07a46" />
<polygon points="340.0,444.0 349.0,441.0 360.0,453.0 351.0,457.0" fill="#e88654" />
<polygon points="360.0,465.0 369.0,462.0 380.0,474.0 371.0,478.0" fill="#e88654" />
<polygon points="282.2,214.0 347.8,258.0 347.8,270.0 284.5,231.0" fill="#a4502e" />
<polygon points="349.3,257.1 281.5,210.2 286.8,208.7 355.0,255.3" fill="#e87a46" />
<polygon points="282.2,212.5 283.2,211.5 349.0,255.8 347.8,258.5" fill="#ea8450" />
<line x1="297.2" y1="294.0" x2="308.3" y2="306.0" stroke="#8a6e6e" stroke-width="4.5" />
<line x1="298.0" y1="293.2" x2="309.1" y2="305.2" stroke="#ac9494" stroke-width="1.2" />
<line x1="315.9" y1="310.0" x2="329.9" y2="324.0" stroke="#8a6e6e" stroke-width="4.5" />
<line x1="316.7" y1="309.2" x2="330.7" y2="323.2" stroke="#ac9494" stroke-width="1.2" />
<line x1="337.5" y1="327.5" x2="351.4" y2="343.0" stroke="#8a6e6e" stroke-width="4.5" />
<line x1="338.3" y1="326.7" x2="352.2" y2="342.2" stroke="#ac9494" stroke-width="1.2" />
<line x1="310.4" y1="363.7" x2="322.9" y2="379.0" stroke="#8a6e6e" stroke-width="4.5" />
<line x1="311.2" y1="362.9" x2="323.7" y2="378.2" stroke="#ac9494" stroke-width="1.2" />
<line x1="329.5" y1="381.0" x2="343.5" y2="396.5" stroke="#8a6e6e" stroke-width="4.5" />
<line x1="330.3" y1="380.2" x2="344.3" y2="395.7" stroke="#ac9494" stroke-width="1.2" />
<line x1="351.0" y1="399.0" x2="364.5" y2="415.0" stroke="#8a6e6e" stroke-width="4.5" />
<line x1="351.8" y1="398.2" x2="365.3" y2="414.2" stroke="#ac9494" stroke-width="1.2" />
<line x1="615.0" y1="11.0" x2="411.7" y2="182.8" stroke="#7e5c58" stroke-width="3.2" />
<line x1="615.0" y1="11.0" x2="484.0" y2="222.6" stroke="#7e5c58" stroke-width="3.2" />
<line x1="615.0" y1="11.0" x2="775.5" y2="128.5" stroke="#7e5c58" stroke-width="3.2" />
<line x1="615.0" y1="11.0" x2="693.0" y2="101.0" stroke="#7e5c58" stroke-width="3.2" />
</svg>
<div class="abs" style="left:0;top:708px;width:1365px;height:11px;background:#f0f0f0;border-top:1px solid #fafafa"></div>
<div class="abs" style="left:2px;top:712px;font-size:12px;line-height:16px;white-space:nowrap">要获取帮助，请按 F1</div>
<div class="abs" style="left:1032px;top:712px;font-size:12px;line-height:16px;white-space:nowrap">建模模式</div>
<div class="abs" style="left:1262px;top:712px;font-size:12px;line-height:16px;white-space:nowrap">输入单位: <span style="margin-left:5px;letter-spacing:0.6px">kN-m</span></div>
<div class="abs" style="left:1106px;top:710px;width:1px;height:9px;background:#c8c8c8"></div>
<div class="abs" style="left:1258px;top:710px;width:1px;height:9px;background:#c8c8c8"></div>
</body></html>
